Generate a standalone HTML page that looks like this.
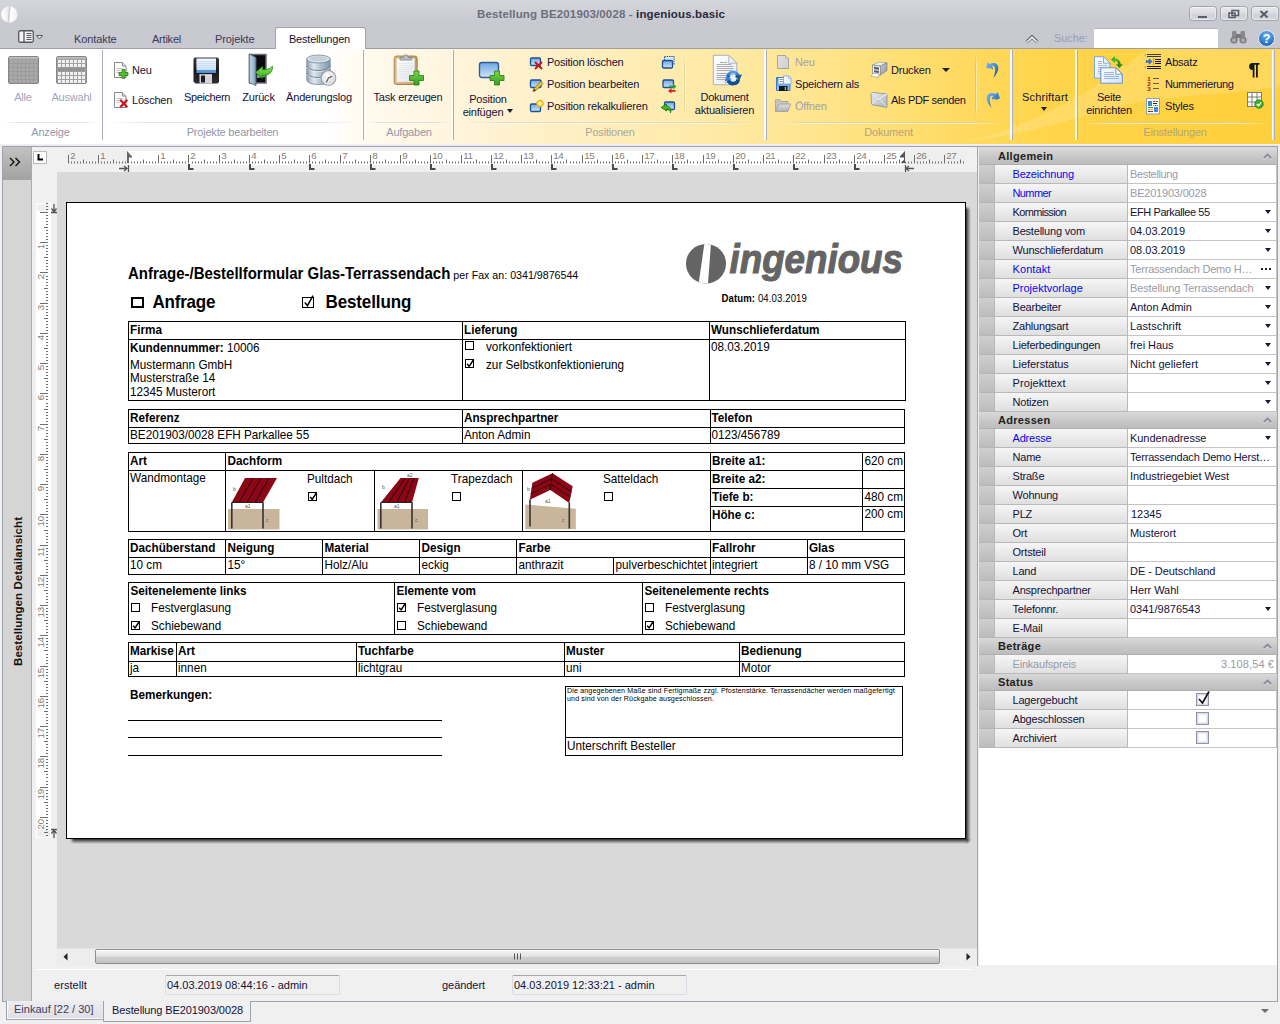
<!DOCTYPE html>
<html><head><meta charset="utf-8">
<style>
*{box-sizing:border-box;margin:0;padding:0}
html,body{width:1280px;height:1024px;overflow:hidden;background:#f0f0f0}
body{font-family:"Liberation Sans",sans-serif;font-size:11px;color:#12123a;position:relative;letter-spacing:-0.2px}
.a{position:absolute}
.t{position:absolute;white-space:nowrap;line-height:14px;height:14px}
.c{text-align:center}
svg{position:absolute;overflow:visible}
/* ---------- title + tabs ---------- */
#top{left:0;top:0;width:1280px;height:49px;background:linear-gradient(#d6d7dc 0,#d0d1d7 9px,#c8c9d1 22px,#c7c8d0 30px,#c9cad1 49px)}
#topline{left:0;top:48px;width:1280px;height:1px;background:#9c9da5}
.wb{position:absolute;top:6px;height:15px;border:1px solid #a2a3ad;border-radius:3.500px;background:linear-gradient(#e9e9ed,#dadbe0 50%,#d0d1d8 51%,#d6d7dd);box-shadow:inset 0 0 0 1px rgba(255,255,255,.45)}
.tab{color:#3a3a55}
#acttab{left:275px;top:27px;width:91px;height:23px;background:#fff;border:1px solid #a4a5ad;border-bottom:none;border-radius:3px 3px 0 0}
/* ---------- ribbon ---------- */
#ribbon{left:0;top:49px;width:1280px;height:95px;background:linear-gradient(to right,#ffffff 0,#ffffff 330px,#fffaee 366px,#fff5de 450px,#fff0c8 540px,#ffecb2 650px,#ffe89c 760px,#ffe590 810px,#ffdf74 900px,#ffd95c 980px,#ffd54c 1040px,#ffd346 1100px,#ffd03c 1280px)}
#ribbot{left:0;top:144px;width:1280px;height:2px;background:linear-gradient(#f4f4f6,#e6e6ea)}
.gs{position:absolute;top:50px;width:3px;height:90px;background:linear-gradient(to right,rgba(255,255,255,.7) 0,rgba(255,255,255,.7) 2px,#a9adbd 2px)}
.gs2{position:absolute;top:50px;width:3px;height:90px;background:linear-gradient(to right,rgba(255,255,255,.7) 0,rgba(255,255,255,.7) 1px,#a9adbd 1px,#a9adbd 2px,rgba(255,255,255,.7) 2px)}
.cap{color:#9497aa;top:125px}
.capl{position:absolute;top:122px;height:2px;background:linear-gradient(rgba(200,200,205,.5) 0,rgba(200,200,205,.5) 1px,rgba(255,255,255,.5) 1px);-webkit-mask-image:linear-gradient(to right,transparent,#000 15%,#000 85%,transparent)}
.dis{color:#a2a5b6}
/* ---------- main ---------- */
#mainborder{left:2px;top:146px;width:1276px;height:856px;border:1px solid #a0a2ae;background:#f0f0f0}
#leftpanel{left:3px;top:147px;width:29px;height:854px;background:#d5d5d5;border-right:1px solid #aaaaaa}
#dbl{left:3px;top:147px;width:28px;height:33px;background:linear-gradient(#c2c2c2,#a2a2a2);}
#docbg{left:57px;top:172px;width:920px;height:776px;background:#d9d9d9}
#page{left:66px;top:202px;width:900px;height:637px;background:#fff;border:1px solid #000}
/* doc text */
.d{position:absolute;white-space:nowrap;font-size:11.73px;line-height:14px;height:14px;color:#000;letter-spacing:0;transform:translateX(.5px) scaleY(1.07);transform-origin:0 11px}
.b{font-weight:bold}
.hl{position:absolute;height:1px;background:#000}
.vl{position:absolute;width:1px;background:#000}
.cb{position:absolute;width:9px;height:9px;border:1px solid #000;background:#fff}
/* right panel */
#rp{left:979px;top:148px;width:298px;height:817px;background:#fff}
.rh{position:absolute;left:0;width:298px;height:17px;background:linear-gradient(#d9d9d9,#c6c6c6 60%,#bdbdbd);border-bottom:1px solid #b0b0b0;font-weight:bold;letter-spacing:.3px;color:#222}
.rr{position:absolute;left:0;width:298px;height:19px}
.ri{position:absolute;left:0;top:0;width:15px;height:19px;background:linear-gradient(#cfcfcf,#bcbcbc);border-bottom:1px solid #b6b6b6}
.rl{position:absolute;left:15px;top:0;width:134px;height:19px;background:linear-gradient(#f6f6f6,#ececec 45%,#dfdfdf);border-left:1px solid #b9b9b9;border-right:1px solid #b9b9b9;border-bottom:1px solid #b9b9b9;padding-left:17.500px;line-height:18px;white-space:nowrap}
.rv{position:absolute;left:149px;top:0;width:149px;height:19px;border-bottom:1px solid #c4c4c4;border-right:1px solid #c4c4c4;padding-left:2px;line-height:18px;white-space:nowrap;overflow:hidden;letter-spacing:-.05px}
.blue{color:#0808f2}
.gray{color:#9a9aa8}
.dd{position:absolute;right:5px;top:7px;width:0;height:0;border-left:3.500px solid transparent;border-right:3.500px solid transparent;border-top:4px solid #1a1a30}
</style></head>
<body>
<div class="a" id="top"></div>
<div class="a" id="topline"></div>
<!-- app logo -->
<svg style="left:1px;top:5.500px" width="17" height="17" viewBox="0 0 17 17"><defs><linearGradient id="lg0" x1="0" y1="0" x2="1" y2="0"><stop offset="0" stop-color="#ffffff"/><stop offset=".45" stop-color="#ececee"/><stop offset=".55" stop-color="#ffffff"/><stop offset="1" stop-color="#f2f2f4"/></linearGradient></defs><circle cx="8.300" cy="8.500" r="8.200" fill="url(#lg0)"/><path d="M8.900 0 L7.300 17" stroke="#cccdd4" stroke-width="1.500"/></svg>
<div class="t b" style="left:477px;top:7px;font-size:11.500px;letter-spacing:.14px;font-weight:bold;color:#6d6e7c">Bestellung BE201903/0028 - <span style="color:#2a2a3a">ingenious.basic</span></div>
<!-- window buttons -->
<div class="wb" style="left:1188.500px;width:28px"></div>
<div class="wb" style="left:1219.500px;width:28px"></div>
<div class="wb" style="left:1250.500px;width:28px"></div>
<svg style="left:1189px;top:7px" width="90" height="14" viewBox="0 0 90 14">
<rect x="9" y="9" width="9" height="2" fill="#5c5d6b"/>
<path d="M43 3.5h6.5v5h-6.5z M40 6h6v4.5h-6z" fill="#e6e6ea" stroke="#5c5d6b" stroke-width="1.6"/>
<path d="M71.5 4 L78.5 10.5 M78.5 4 L71.5 10.5" stroke="#5c5d6b" stroke-width="2.2"/>
</svg>
<!-- quick menu icon -->
<svg style="left:18px;top:30px" width="26" height="14" viewBox="0 0 26 14">
<rect x=".75" y=".75" width="14.5" height="11.5" rx="1.5" fill="#f4f4f6" stroke="#55565f" stroke-width="1.3"/>
<path d="M6 1v11" stroke="#55565f" stroke-width="1.3"/>
<path d="M8.5 3.5h5M8.5 5.5h5M8.5 7.5h5M8.5 9.5h5" stroke="#55565f" stroke-width="1"/>
<path d="M18.5 5.5h6l-3 3.5z" fill="#f4f4f6" stroke="#55565f" stroke-width="1"/>
</svg>
<div class="t tab" style="left:74px;top:32px;letter-spacing:-.1px">Kontakte</div>
<div class="t tab" style="left:152px;top:32px;letter-spacing:-.22px">Artikel</div>
<div class="t tab" style="left:215px;top:32px;letter-spacing:-.1px">Projekte</div>
<div class="a" id="acttab"></div>
<div class="t" style="left:289px;top:32px;letter-spacing:-.22px">Bestellungen</div>
<!-- right side of tab row -->
<svg style="left:1025px;top:34px" width="14" height="10" viewBox="0 0 14 10"><path d="M1.800 7.800 L7 2.800 L12.200 7.800" fill="none" stroke="#6b6c78" stroke-width="3.400"/><path d="M2.200 7.800 L7 3.200 L11.800 7.800" fill="none" stroke="#f6f6f8" stroke-width="1.500"/></svg>
<div class="t" style="left:1054px;top:31px;color:#9c9dac;letter-spacing:-.1px">Suche:</div>
<div class="a" style="left:1094px;top:28px;width:124px;height:20px;background:#fff;border-top:1px solid #b4b5be"></div>
<!-- binoculars -->
<svg style="left:1230px;top:30px" width="17" height="15" viewBox="0 0 17 15">
<rect x="2" y="1" width="4.5" height="6" rx="1" fill="#8a8a8a"/><rect x="10.5" y="1" width="4.5" height="6" rx="1" fill="#8a8a8a"/>
<rect x="6" y="4" width="5" height="4" fill="#777"/>
<circle cx="4" cy="10" r="3.6" fill="#7d7d7d"/><circle cx="13" cy="10" r="3.6" fill="#7d7d7d"/>
<circle cx="4" cy="10.3" r="2" fill="#a9a9a9"/><circle cx="13" cy="10.3" r="2" fill="#a9a9a9"/>
</svg>
<!-- help -->
<svg style="left:1258px;top:30px" width="17" height="17" viewBox="0 0 17 17">
<defs><radialGradient id="hg" cx=".5" cy=".3" r=".7"><stop offset="0" stop-color="#6db4f0"/><stop offset="1" stop-color="#1a62b8"/></radialGradient></defs>
<circle cx="8.5" cy="8.5" r="8" fill="url(#hg)" stroke="#e8eef8" stroke-width="1"/>
<text x="8.5" y="13" font-family="Liberation Sans" font-weight="bold" font-size="12.5" fill="#fff" text-anchor="middle" letter-spacing="0">?</text>
</svg>

<div class="a" id="ribbon"></div>
<!-- wave decoration -->
<svg style="left:0;top:49px" width="1280" height="94" viewBox="0 0 1280 94">
<defs><pattern id="stp" width="3" height="3" patternUnits="userSpaceOnUse" patternTransform="rotate(-35)"><rect width="3" height="1" fill="#fff" opacity=".5"/></pattern></defs>
<path d="M960 94 C1000 86,1040 68,1070 52 C1100 36,1125 16,1148 0 L1280 0 L1280 38 C1230 44,1180 47,1145 52 C1100 60,1040 84,960 94 Z" fill="#fff" opacity=".11"/>
<path d="M960 94 C1000 86,1040 68,1070 52 C1100 36,1125 16,1148 0 L1280 0 L1280 38 C1230 44,1180 47,1145 52 C1100 60,1040 84,960 94 Z" fill="url(#stp)" opacity=".3"/>
</svg>
<div class="a" id="ribbot"></div>
<div class="gs" style="left:100px"></div><div class="gs" style="left:361px"></div><div class="gs" style="left:451px"></div><div class="gs" style="left:764px"></div><div class="gs" style="left:1010px"></div><div class="gs" style="left:1075px"></div><div class="gs2" style="left:1272px"></div>
<div class="gs" style="left:764px"></div><div class="gs" style="left:1010px"></div><div class="gs" style="left:1075px"></div><div class="gs" style="left:1272px"></div>
<div class="a" style="left:684px;top:54px;width:2px;height:64px;background:linear-gradient(to right,rgba(205,185,120,.35) 0,rgba(205,185,120,.35) 1px,rgba(255,255,255,.6) 1px);-webkit-mask-image:linear-gradient(transparent,#000 20%,#000 80%,transparent)"></div>
<div class="a" style="left:975px;top:54px;width:2px;height:64px;background:linear-gradient(to right,rgba(205,165,60,.4) 0,rgba(205,165,60,.4) 1px,rgba(255,255,255,.5) 1px);-webkit-mask-image:linear-gradient(transparent,#000 20%,#000 80%,transparent)"></div>
<div class="capl" style="left:4px;width:94px"></div><div class="capl" style="left:108px;width:251px"></div><div class="capl" style="left:369px;width:80px"></div>
<div class="capl" style="left:459px;width:302px"></div><div class="capl" style="left:771px;width:236px"></div><div class="capl" style="left:1082px;width:187px"></div>
<div class="t cap c" style="left:10px;width:81px">Anzeige</div>
<div class="t cap c" style="left:172px;width:121px">Projekte bearbeiten</div>
<div class="t cap c" style="left:369px;width:80px">Aufgaben</div>
<div class="t cap c" style="left:560px;width:100px;color:#a9a69e">Positionen</div>
<div class="t cap c" style="left:838px;width:101px;color:#b3a47d">Dokument</div>
<div class="t cap c" style="left:1125px;width:100px;color:#b3a47d">Einstellungen</div>

<!-- ===== Anzeige ===== -->
<svg style="left:8px;top:56px" width="31" height="28" viewBox="0 0 31 28"><defs><linearGradient id="tba" x1="0" y1="0" x2="0" y2="1"><stop offset="0" stop-color="#c6c6c6"/><stop offset="1" stop-color="#a6a6a6"/></linearGradient></defs><rect x=".5" y=".5" width="30" height="27" rx="1.500" fill="#9b9b9b" stroke="#858585"/><rect x="1" y="1" width="29" height="2.500" fill="url(#tba)"/><rect x="2" y="4" width="3" height="3" fill="#a9a9a9"/><rect x="6" y="4" width="3" height="3" fill="#a9a9a9"/><rect x="10" y="4" width="3" height="3" fill="#a9a9a9"/><rect x="14" y="4" width="3" height="3" fill="#a9a9a9"/><rect x="18" y="4" width="3" height="3" fill="#a9a9a9"/><rect x="22" y="4" width="3" height="3" fill="#a9a9a9"/><rect x="26" y="4" width="3" height="3" fill="#a9a9a9"/><rect x="2" y="8" width="3" height="3" fill="#a9a9a9"/><rect x="6" y="8" width="3" height="3" fill="#a9a9a9"/><rect x="10" y="8" width="3" height="3" fill="#a9a9a9"/><rect x="14" y="8" width="3" height="3" fill="#a9a9a9"/><rect x="18" y="8" width="3" height="3" fill="#a9a9a9"/><rect x="22" y="8" width="3" height="3" fill="#a9a9a9"/><rect x="26" y="8" width="3" height="3" fill="#a9a9a9"/><rect x="2" y="12" width="3" height="3" fill="#a9a9a9"/><rect x="6" y="12" width="3" height="3" fill="#a9a9a9"/><rect x="10" y="12" width="3" height="3" fill="#a9a9a9"/><rect x="14" y="12" width="3" height="3" fill="#a9a9a9"/><rect x="18" y="12" width="3" height="3" fill="#a9a9a9"/><rect x="22" y="12" width="3" height="3" fill="#a9a9a9"/><rect x="26" y="12" width="3" height="3" fill="#a9a9a9"/><rect x="2" y="16" width="3" height="3" fill="#a9a9a9"/><rect x="6" y="16" width="3" height="3" fill="#a9a9a9"/><rect x="10" y="16" width="3" height="3" fill="#a9a9a9"/><rect x="14" y="16" width="3" height="3" fill="#a9a9a9"/><rect x="18" y="16" width="3" height="3" fill="#a9a9a9"/><rect x="22" y="16" width="3" height="3" fill="#a9a9a9"/><rect x="26" y="16" width="3" height="3" fill="#a9a9a9"/><rect x="2" y="20" width="3" height="3" fill="#a9a9a9"/><rect x="6" y="20" width="3" height="3" fill="#a9a9a9"/><rect x="10" y="20" width="3" height="3" fill="#a9a9a9"/><rect x="14" y="20" width="3" height="3" fill="#a9a9a9"/><rect x="18" y="20" width="3" height="3" fill="#a9a9a9"/><rect x="22" y="20" width="3" height="3" fill="#a9a9a9"/><rect x="26" y="20" width="3" height="3" fill="#a9a9a9"/><rect x="2" y="24" width="3" height="3" fill="#a9a9a9"/><rect x="6" y="24" width="3" height="3" fill="#a9a9a9"/><rect x="10" y="24" width="3" height="3" fill="#a9a9a9"/><rect x="14" y="24" width="3" height="3" fill="#a9a9a9"/><rect x="18" y="24" width="3" height="3" fill="#a9a9a9"/><rect x="22" y="24" width="3" height="3" fill="#a9a9a9"/><rect x="26" y="24" width="3" height="3" fill="#a9a9a9"/></svg>
<svg style="left:56px;top:56px" width="31" height="28" viewBox="0 0 31 28"><defs><linearGradient id="tbb" x1="0" y1="0" x2="0" y2="1"><stop offset="0" stop-color="#c6c6c6"/><stop offset="1" stop-color="#a6a6a6"/></linearGradient></defs><rect x=".5" y=".5" width="30" height="27" rx="1.500" fill="#a2a2a2" stroke="#868686"/><rect x="1" y="1" width="29" height="2.500" fill="url(#tbb)"/><rect x="2" y="4" width="3" height="3" fill="#f1f1f1"/><rect x="6" y="4" width="3" height="3" fill="#f1f1f1"/><rect x="10" y="4" width="3" height="3" fill="#f1f1f1"/><rect x="14" y="4" width="3" height="3" fill="#f1f1f1"/><rect x="18" y="4" width="3" height="3" fill="#f1f1f1"/><rect x="22" y="4" width="3" height="3" fill="#f1f1f1"/><rect x="26" y="4" width="3" height="3" fill="#f1f1f1"/><rect x="2" y="8" width="3" height="3" fill="#f1f1f1"/><rect x="6" y="8" width="3" height="3" fill="#f1f1f1"/><rect x="10" y="8" width="3" height="3" fill="#f1f1f1"/><rect x="14" y="8" width="3" height="3" fill="#f1f1f1"/><rect x="18" y="8" width="3" height="3" fill="#f1f1f1"/><rect x="22" y="8" width="3" height="3" fill="#f1f1f1"/><rect x="26" y="8" width="3" height="3" fill="#f1f1f1"/><rect x="2" y="12" width="3" height="3" fill="#949494"/><rect x="6" y="12" width="3" height="3" fill="#949494"/><rect x="10" y="12" width="3" height="3" fill="#949494"/><rect x="14" y="12" width="3" height="3" fill="#949494"/><rect x="18" y="12" width="3" height="3" fill="#949494"/><rect x="22" y="12" width="3" height="3" fill="#949494"/><rect x="26" y="12" width="3" height="3" fill="#949494"/><rect x="2" y="16" width="3" height="3" fill="#f1f1f1"/><rect x="6" y="16" width="3" height="3" fill="#f1f1f1"/><rect x="10" y="16" width="3" height="3" fill="#f1f1f1"/><rect x="14" y="16" width="3" height="3" fill="#f1f1f1"/><rect x="18" y="16" width="3" height="3" fill="#f1f1f1"/><rect x="22" y="16" width="3" height="3" fill="#f1f1f1"/><rect x="26" y="16" width="3" height="3" fill="#f1f1f1"/><rect x="2" y="20" width="3" height="3" fill="#f1f1f1"/><rect x="6" y="20" width="3" height="3" fill="#f1f1f1"/><rect x="10" y="20" width="3" height="3" fill="#f1f1f1"/><rect x="14" y="20" width="3" height="3" fill="#f1f1f1"/><rect x="18" y="20" width="3" height="3" fill="#f1f1f1"/><rect x="22" y="20" width="3" height="3" fill="#f1f1f1"/><rect x="26" y="20" width="3" height="3" fill="#f1f1f1"/><rect x="2" y="24" width="3" height="3" fill="#f1f1f1"/><rect x="6" y="24" width="3" height="3" fill="#f1f1f1"/><rect x="10" y="24" width="3" height="3" fill="#f1f1f1"/><rect x="14" y="24" width="3" height="3" fill="#f1f1f1"/><rect x="18" y="24" width="3" height="3" fill="#f1f1f1"/><rect x="22" y="24" width="3" height="3" fill="#f1f1f1"/><rect x="26" y="24" width="3" height="3" fill="#f1f1f1"/><rect x="2" y="11.500" width="27" height="4" fill="#8f8f8f" opacity=".55"/></svg>
<div class="t c dis" style="left:3px;width:40px;top:90px">Alle</div>
<div class="t c dis" style="left:46px;width:51px;top:90px">Auswahl</div>

<!-- ===== Projekte bearbeiten ===== -->
<svg style="left:114px;top:62px" width="16" height="17" viewBox="0 0 16 17">
<path d="M.5 .5h8l3.500 3.500v11.500h-11.500z" fill="#fbfbfb" stroke="#8b8b8b"/><path d="M8.500 .5v3.500h3.500" fill="#e8e8e8" stroke="#8b8b8b"/>
<path d="M2.500 6.500h6M2.500 8.500h4M2.500 10.500h3" stroke="#c4c4c4"/>
<path d="M8 7.500h3v3h3v3h-3v2.800h-3v-2.800h-3v-3h3z" fill="#56c030" stroke="#2a7a12" stroke-width=".8"/>
</svg>
<div class="t" style="left:132px;top:63px">Neu</div>
<svg style="left:114px;top:92px" width="16" height="17" viewBox="0 0 16 17">
<path d="M.5 .5h8l3.500 3.500v11.500h-11.500z" fill="#fbfbfb" stroke="#8b8b8b"/><path d="M8.500 .5v3.500h3.500" fill="#e8e8e8" stroke="#8b8b8b"/>
<path d="M2.500 6.500h6M2.500 8.500h4M2.500 10.500h3" stroke="#c4c4c4"/>
<path d="M6.200 7.800 L13.300 15.200 M13.300 7.800 L6.200 15.200" stroke="#c8141e" stroke-width="2.200"/>
</svg>
<div class="t" style="left:132px;top:93px">Löschen</div>
<!-- Speichern floppy -->
<svg style="left:193px;top:57px" width="27" height="27" viewBox="0 0 27 27">
<defs><linearGradient id="fl" x1="0" y1="0" x2="0" y2="1"><stop offset="0" stop-color="#f4f9ff"/><stop offset=".75" stop-color="#d4e6fa"/><stop offset=".8" stop-color="#5f9fdc"/><stop offset="1" stop-color="#4a8bd0"/></linearGradient>
<linearGradient id="fb" x1="0" y1="0" x2="0" y2="1"><stop offset="0" stop-color="#3a3a40"/><stop offset=".5" stop-color="#17171b"/><stop offset="1" stop-color="#2c2c32"/></linearGradient></defs>
<path d="M1.500 .5h23l1.500 1.500v23l-1.500 1.500h-22l-2-2v-22.500z" fill="url(#fb)"/>
<rect x="3.500" y="1.500" width="19.500" height="14.500" fill="url(#fl)"/>
<path d="M3.500 4.500h19.500M3.500 6.500h19.500M3.500 8.500h19.500M3.500 10.500h19.500" stroke="#c3d9f2" stroke-width=".8"/>
<rect x="6.500" y="17.500" width="12.500" height="9" fill="#d4d4d8"/><rect x="6.500" y="17.500" width="12.500" height="1" fill="#f4f4f4"/>
<rect x="8" y="18.500" width="4" height="7" fill="#1c1c22"/>
</svg>
<div class="t c" style="left:177px;width:60px;top:90px;letter-spacing:-.39px">Speichern</div>
<!-- Zurück door -->
<svg style="left:248px;top:53px" width="26" height="33" viewBox="0 0 26 33">
<defs><linearGradient id="dr" x1="0" y1="0" x2="1" y2="0"><stop offset="0" stop-color="#c3d7e8"/><stop offset=".6" stop-color="#9fbbd2"/><stop offset="1" stop-color="#6f8ca5"/></linearGradient>
<linearGradient id="ar" x1="0" y1="0" x2="0" y2="1"><stop offset="0" stop-color="#8fe65a"/><stop offset="1" stop-color="#2faa16"/></linearGradient></defs>
<path d="M1.500 1.500h16.500v28.500h-16.500z" fill="#0c0c10" stroke="#6d6f75" stroke-width="1.500"/>
<path d="M1.300 1 L8 4.500 V32.500 L1.300 29.500 Z" fill="url(#dr)" stroke="#566b80" stroke-width=".9"/>
<path d="M9 22l8-1.500v3.500l-8 1z" fill="#b5b5b5" opacity=".8"/>
<path d="M7.500 19.500 L14.500 13.500 V16.800 C18.500 16.800 21.500 16.300 24.500 13.200 C24.800 19.500 20.500 22.800 14.500 22.500 V25.500 Z" fill="url(#ar)" stroke="#218a10" stroke-width=".8"/>
</svg>
<div class="t c" style="left:238px;width:41px;top:90px">Zurück</div>
<!-- Änderungslog -->
<svg style="left:306px;top:54px" width="32" height="33" viewBox="0 0 32 33">
<defs><linearGradient id="db" x1="0" y1="0" x2="1" y2="0"><stop offset="0" stop-color="#8da1b0"/><stop offset=".3" stop-color="#dfe8ee"/><stop offset=".55" stop-color="#b5c6d2"/><stop offset="1" stop-color="#7d93a4"/></linearGradient>
<radialGradient id="ck" cx=".4" cy=".35" r=".7"><stop offset="0" stop-color="#ffffff"/><stop offset="1" stop-color="#d4d4d4"/></radialGradient></defs>
<path d="M.8 5v21c0 2.700 5.200 4.500 11.700 4.500s11.700-1.800 11.700-4.500v-21z" fill="url(#db)" stroke="#74889a" stroke-width=".8"/>
<ellipse cx="12.500" cy="5" rx="11.700" ry="4" fill="#d9e3ea" stroke="#74889a" stroke-width=".8"/>
<ellipse cx="12.500" cy="4.700" rx="9" ry="2.600" fill="#c2d0da"/>
<path d="M.8 12c0 2.700 5.200 4.500 11.700 4.500s11.700-1.800 11.700-4.500M.8 19c0 2.700 5.200 4.500 11.700 4.500s11.700-1.800 11.700-4.500" fill="none" stroke="#6b8092" stroke-width="1"/>
<path d="M.8 13c0 2.700 5.200 4.500 11.700 4.500s11.700-1.800 11.700-4.500M.8 20c0 2.700 5.200 4.500 11.700 4.500s11.700-1.800 11.700-4.500" fill="none" stroke="#f0f4f7" stroke-width=".8" opacity=".8"/>
<circle cx="22.500" cy="24" r="7.800" fill="#8d8d8d"/>
<circle cx="22.500" cy="24" r="6.500" fill="url(#ck)" stroke="#f8f8f8" stroke-width=".8"/>
<path d="M26.300 22.300l-3.800 1.700-2.200 4.300" fill="none" stroke="#555" stroke-width="1.100" stroke-linejoin="miter"/>
</svg>
<div class="t c" style="left:282px;width:74px;top:90px;letter-spacing:-.16px">Änderungslog</div>

<!-- ===== Aufgaben ===== -->
<svg style="left:393px;top:53px" width="32" height="34" viewBox="0 0 32 34">
<defs><linearGradient id="cl" x1="0" y1="0" x2="1" y2="0"><stop offset="0" stop-color="#e0bb84"/><stop offset="1" stop-color="#c99a58"/></linearGradient>
<linearGradient id="pp" x1="0" y1="0" x2="1" y2="1"><stop offset="0" stop-color="#ffffff"/><stop offset="1" stop-color="#dfe3e8"/></linearGradient>
<linearGradient id="pl" x1="0" y1="0" x2="0" y2="1"><stop offset="0" stop-color="#7cd651"/><stop offset="1" stop-color="#3a9c1e"/></linearGradient></defs>
<rect x="1.200" y="3" width="23" height="28.500" rx="2.500" fill="url(#cl)" stroke="#a87a3a" stroke-width=".9"/>
<rect x="3.800" y="5.500" width="18" height="23.500" fill="url(#pp)" stroke="#d6d6d6" stroke-width=".5"/>
<path d="M5.500 10.500h14.500M5.500 12.500h14.500M5.500 14.500h14.500M5.500 16.500h14.500M5.500 18.500h14.500M5.500 20.500h14.500M5.500 22.500h14.500M5.500 24.500h14.500" stroke="#e3e6ea" stroke-width=".8"/>
<path d="M7 7v-2.500h3.500c0-1.800 .9-2.800 2.300-2.800s2.300 1 2.300 2.800h3.500v2.500z" fill="#b9bdc4" stroke="#7e838b" stroke-width=".8"/>
<path d="M21 18h5v4.500h4.500v5h-4.500v4.500h-5v-4.500h-4.500v-5h4.500z" fill="url(#pl)" stroke="#2e8416" stroke-width=".9"/>
</svg>
<div class="t c" style="left:368px;width:80px;top:90px">Task erzeugen</div>

<!-- ===== Positionen ===== -->
<svg style="left:478px;top:60px" width="29" height="27" viewBox="0 0 29 27">
<defs><linearGradient id="pb" x1="0" y1="0" x2="0" y2="1"><stop offset="0" stop-color="#6ea6e2"/><stop offset="1" stop-color="#cfe4fa"/></linearGradient></defs>
<rect x="1.500" y="2.500" width="19" height="15" rx="2.500" fill="url(#pb)" stroke="#2d5e9c" stroke-width="1.400"/>
<path d="M16.500 11h5v4.500h4.500v5h-4.500v4.500h-5v-4.500h-4.500v-5h4.500z" fill="url(#pl)" stroke="#2e8416" stroke-width=".9"/>
</svg>
<div class="t c" style="left:457px;width:62px;top:92px">Position</div>
<div class="t c" style="left:452px;width:62px;top:105px">einfügen</div>
<div class="a" style="left:506.500px;top:109px;border-left:3.500px solid transparent;border-right:3.500px solid transparent;border-top:4px solid #1a1a30"></div>
<!-- small: Position löschen -->
<svg style="left:529px;top:55px" width="16" height="16" viewBox="0 0 16 16">
<rect x="1.500" y="3" width="10" height="7.500" rx="1.200" fill="url(#pb)" stroke="#1c4f8f" stroke-width="1.300"/>
<path d="M6 7 L13 14 M13 7 L6 14" stroke="#c8141e" stroke-width="2"/>
</svg>
<div class="t" style="left:547px;top:55px;letter-spacing:-.23px">Position löschen</div>
<svg style="left:529px;top:77px" width="16" height="16" viewBox="0 0 16 16">
<rect x="1.500" y="3" width="10.500" height="7.500" rx="1.200" fill="url(#pb)" stroke="#1c4f8f" stroke-width="1.300"/>
<path d="M4 14.500 l1-3 7-7 2 2 -7 7z" fill="#f1c232" stroke="#8a6a10" stroke-width=".8"/><path d="M4 14.500l1-3 2 2z" fill="#444"/>
</svg>
<div class="t" style="left:547px;top:77px;letter-spacing:-.1px">Position bearbeiten</div>
<svg style="left:529px;top:99px" width="16" height="16" viewBox="0 0 16 16">
<rect x="1.500" y="5" width="10" height="7.500" rx="1.200" fill="url(#pb)" stroke="#1c4f8f" stroke-width="1.300"/>
<circle cx="11" cy="4.500" r="3.300" fill="#ffd83a" stroke="#e8a600" stroke-width=".9"/><circle cx="11" cy="4.500" r="1.400" fill="#fff6c0"/>
</svg>
<div class="t" style="left:547px;top:99px;letter-spacing:-.18px">Position rekalkulieren</div>
<!-- tiny icons column -->
<svg style="left:660px;top:55px" width="16" height="16" viewBox="0 0 16 16">
<rect x="4.500" y="1.500" width="9.500" height="7.500" fill="#d6e8fb" stroke="#1c4f8f" stroke-width="1.100" stroke-dasharray="1.300 1"/>
<rect x="2.500" y="5.500" width="10" height="7.500" rx="1.200" fill="url(#pb)" stroke="#1c4f8f" stroke-width="1.300"/>
</svg>
<svg style="left:660px;top:77px" width="16" height="16" viewBox="0 0 16 16">
<rect x="3" y="3" width="10.500" height="7.500" rx="1.200" fill="url(#pb)" stroke="#1c4f8f" stroke-width="1.300"/>
<path d="M9 8.500h4v-2l3.500 3-3.500 3v-2h-4z" fill="#2fa32a"/>
<path d="M15.500 13h-4v-2l-3.500 3 3.500 2.500v-1.800h4z" fill="#d0202a"/>
</svg>
<svg style="left:659px;top:99px" width="17" height="16" viewBox="0 0 17 16">
<rect x="5.500" y="3" width="10" height="7.500" rx="1.200" fill="url(#pb)" stroke="#1c4f8f" stroke-width="1.300"/>
<path d="M7.500 5 L2 8.500 L7.500 12 V10 C10 10 11 11 11.500 14 C13 10 11 7 7.500 7 Z" fill="#46b52c" stroke="#1f7a10" stroke-width=".8"/>
</svg>
<!-- Dokument aktualisieren -->
<svg style="left:712px;top:54px" width="31" height="33" viewBox="0 0 31 33">
<defs><linearGradient id="dp" x1="0" y1="0" x2="1" y2="1"><stop offset="0" stop-color="#ffffff"/><stop offset="1" stop-color="#e3e9f1"/></linearGradient>
<linearGradient id="ra" x1="0" y1="0" x2="0" y2="1"><stop offset="0" stop-color="#4a9be6"/><stop offset="1" stop-color="#0f518f"/></linearGradient></defs>
<path d="M1.300 1.300h15.500l8 8v21.500h-23.500z" fill="url(#dp)" stroke="#a4a9b0" stroke-width=".9"/><path d="M16.800 1.300v8h8z" fill="#eef1f5" stroke="#a4a9b0" stroke-width=".8"/>
<path d="M8 8.500h7M4.500 10.500h15M4.500 12.500h17M4.500 14.500h17M4.500 16.500h16M4.500 19.500h12M4.500 21.500h11M4.500 23.500h11M4.500 25.500h10M13 28.500h3" stroke="#9a9a9a" stroke-width=".8"/>
<path d="M15.980 22.880 A5.300 5.300 0 0 1 26.180 21.990" fill="none" stroke="url(#ra)" stroke-width="3.600"/>
<path d="M27.600 26 L30 20.300 L22.700 22.600 Z" fill="#16589a"/>
<path d="M26.420 25.200 A5.300 5.300 0 0 1 16.220 26.100" fill="none" stroke="#0f518f" stroke-width="3.600"/>
<path d="M14.800 21.500 L12.600 27.400 L19.600 25.200 Z" fill="#2f7fce"/>
<path d="M17.500 21.500 a4.500 4.500 0 0 1 6 -1.500" fill="none" stroke="#cfe6ff" stroke-width="1" opacity=".8"/>
</svg>
<div class="t c" style="left:690px;width:69px;top:90px;letter-spacing:-.27px">Dokument</div>
<div class="t c" style="left:690px;width:69px;top:103px;letter-spacing:-.17px">aktualisieren</div>

<!-- ===== Dokument ===== -->
<svg style="left:776px;top:54px" width="15" height="17" viewBox="0 0 15 17">
<defs><linearGradient id="dn" x1="0" y1="0" x2="1" y2="1"><stop offset="0" stop-color="#e2e2e2"/><stop offset="1" stop-color="#cfcfcf"/></linearGradient></defs>
<path d="M1.500 1.500h8l3 3v10h-11z" fill="url(#dn)" stroke="#a6a6a6" stroke-width="1"/><path d="M9.500 1.500v3h3z" fill="#f0f0f0" stroke="#a6a6a6" stroke-width=".7"/>
</svg>
<div class="t dis" style="left:795px;top:55px;color:#9fa1b0">Neu</div>
<svg style="left:775px;top:75px" width="17" height="17" viewBox="0 0 17 17">
<defs><linearGradient id="sa" x1="0" y1="0" x2="0" y2="1"><stop offset="0" stop-color="#3f86dc"/><stop offset="1" stop-color="#9cc6f3"/></linearGradient></defs>
<path d="M1.500 2.500h12.500l1 1v12h-13.500z" fill="url(#sa)" stroke="#2f73c8" stroke-width=".9"/>
<rect x="3.500" y="3" width="5.500" height="5.500" fill="#fdfdfd"/><path d="M4.500 4.500h3.500M4.500 6.500h3.500" stroke="#7a8fa8" stroke-width=".9"/>
<rect x="4" y="11" width="8.500" height="5" fill="#15151a"/><rect x="9.800" y="12" width="1.300" height="3.200" fill="#8fc0f2"/>
<path d="M8.500 .8h5l2.500 2.500v5.700h-7.500z" fill="#f1f7fe" stroke="#6fa0dc" stroke-width=".8"/><path d="M13.500 .8v2.500h2.500z" fill="#fff" stroke="#6fa0dc" stroke-width=".6"/>
</svg>
<div class="t" style="left:795px;top:77px">Speichern als</div>
<svg style="left:774px;top:98px" width="18" height="15" viewBox="0 0 18 15">
<defs><linearGradient id="fo" x1="0" y1="0" x2="0" y2="1"><stop offset="0" stop-color="#dedede"/><stop offset="1" stop-color="#b4b4b4"/></linearGradient></defs>
<path d="M1.500 1.800h4.500l1.200 1.700h6.800v9.800h-12.500z" fill="#c6c6c6" stroke="#a3a3a3" stroke-width=".9"/>
<path d="M1.500 13.300l3.500-7.300h11.800l-3.300 7.300z" fill="url(#fo)" stroke="#a0a0a0" stroke-width=".9"/>
</svg>
<div class="t dis" style="left:795px;top:99px;color:#9fa1b0">Öffnen</div>
<!-- Drucken -->
<svg style="left:870px;top:61px" width="18" height="18" viewBox="0 0 18 18">
<defs><linearGradient id="prs" x1="0" y1="0" x2="1" y2="1"><stop offset="0" stop-color="#c9ced3"/><stop offset="1" stop-color="#8c949c"/></linearGradient></defs>
<path d="M2.500 4 L9 1 L17 1.700 L10.500 5 Z" fill="#e9ecef" stroke="#8a9199" stroke-width=".6"/>
<path d="M10.500 5 L17 1.700 L17 9.500 L10.500 14 Z" fill="url(#prs)" stroke="#6f7780" stroke-width=".6"/>
<path d="M2.500 4 L10.500 5 L10.500 14 L2.500 12.500 Z" fill="#eef0f2" stroke="#7a828a" stroke-width=".7"/>
<path d="M4 5.800 L9 6.500 L9 12 L4 11.200 Z" fill="#59626b"/>
<path d="M4 8 L9 8.700 L9 10 L4 9.300 Z" fill="#d5d9dd"/>
<path d="M4.200 6 l1.500 .2" stroke="#3fb52a" stroke-width="1"/>
<path d="M3.500 12 L9.500 13 L8 16.500 L1 15 Z" fill="#fbfbfb" stroke="#8a9199" stroke-width=".6"/>
</svg>
<div class="t" style="left:891px;top:63px">Drucken</div>
<div class="a" style="left:942px;top:68px;border-left:4px solid transparent;border-right:4px solid transparent;border-top:4px solid #1e1e2d"></div>
<svg style="left:870px;top:91px" width="18" height="18" viewBox="0 0 18 18">
<defs><linearGradient id="env" x1="0" y1="0" x2="1" y2="1"><stop offset="0" stop-color="#eceef0"/><stop offset="1" stop-color="#a9b1b9"/></linearGradient></defs>
<path d="M1 1.300 L17 3 L17 16.500 L1.500 13.500 Z" fill="url(#env)" stroke="#858d96" stroke-width=".8"/>
<path d="M1 1.300 L8 9.300 L17 3" fill="none" stroke="#f8f9fa" stroke-width="1.100"/>
<path d="M1.500 13.500 L6.500 7.800 M17 16.500 L10 8" fill="none" stroke="#f2f3f5" stroke-width=".8"/>
<path d="M1 1.300 L8 9.300 L17 3" fill="none" stroke="#8f979f" stroke-width=".4" transform="translate(0 .8)"/>
</svg>
<div class="t" style="left:891px;top:93px;letter-spacing:-.35px">Als PDF senden</div>
<!-- undo / redo -->
<svg style="left:985px;top:61px" width="16" height="18" viewBox="0 0 16 18">
<defs><linearGradient id="ud" x1="0" y1="0" x2="1" y2="1"><stop offset="0" stop-color="#7cc0ff"/><stop offset="1" stop-color="#0e4aa8"/></linearGradient></defs>
<path d="M2.200 1.300 L1.200 7 L3.800 7.200 C6 7 7.500 7.600 7.900 8.700 L8.100 8.700 C8.300 5.500 6.500 5 6 5 C9 4 10.500 6 10.200 9.500 C10 12.500 9 14.500 8.600 16.800 C11.500 13.500 13.300 10 13.300 7 C13.300 3.500 10.500 1.200 6.500 2.300 L5 3 Z" fill="url(#ud)"/>
</svg>
<svg style="left:985px;top:91px" width="16" height="18" viewBox="0 0 16 18">
<path d="M12.800 1.300 L15 7.200 L11.500 8.700 C9 7.500 7.500 8 7.200 8.700 L6.900 8.700 C6.700 5.500 8.500 5 9 5 C6 4 4.500 6 4.800 9.500 C5 12.500 6 14.500 6.400 16.800 C3.500 13.500 1.700 10 1.700 7 C1.700 3.500 4.500 1.200 8.500 2.300 L10.500 3 Z" fill="url(#ud)"/>
</svg>
<!-- Schriftart -->
<div class="t c" style="left:1015px;width:60px;top:90px;letter-spacing:.2px">Schriftart</div>
<div class="a" style="left:1041px;top:107px;border-left:3.500px solid transparent;border-right:3.500px solid transparent;border-top:4px solid #1e1e2d"></div>

<!-- ===== Einstellungen ===== -->
<svg style="left:1093px;top:55px" width="33" height="31" viewBox="0 0 33 31">
<defs><linearGradient id="pg" x1="0" y1="0" x2="1" y2="1"><stop offset="0" stop-color="#ffffff"/><stop offset="1" stop-color="#d3e2f4"/></linearGradient>
<linearGradient id="ga" x1="0" y1="0" x2="1" y2="1"><stop offset="0" stop-color="#5fce3e"/><stop offset="1" stop-color="#1f8a10"/></linearGradient></defs>
<path d="M1.500 1.700h9l6.500 6.500v15h-15.500z" fill="url(#pg)" stroke="#7fa3d8" stroke-width="1"/><path d="M10.500 1.700v6.500h6.500z" fill="#f4f8fd" stroke="#7fa3d8" stroke-width=".9"/>
<path d="M5 6.500h4M5 8.500h4M5 10.500h9M5 12.500h9M5 14.500h4M5 16.500h3M5 18.500h3" stroke="#9dbbe0" stroke-width=".9"/>
<path d="M7.800 12.800h15l6.500 6.500v9h-21.500z" fill="url(#pg)" stroke="#6f97d0" stroke-width="1.100"/><path d="M22.800 12.800v6.500h6.500z" fill="#f4f8fd" stroke="#6f97d0" stroke-width=".9"/>
<path d="M11 17.500h10M11 19.500h10M11 21.500h15M11 23.500h15" stroke="#8fb0da" stroke-width=".9"/>
<path d="M21 4.400 A5.400 5.400 0 0 1 26.400 9.800" fill="none" stroke="url(#ga)" stroke-width="2.800"/>
<path d="M18 4.400 L21.800 .9 L21.800 7.900 Z" fill="#3db52a"/>
<path d="M26.400 13 L22.900 9.300 L29.900 9.300 Z" fill="#1f8a10"/>
</svg>
<div class="t c" style="left:1079px;width:60px;top:90px">Seite</div>
<div class="t c" style="left:1079px;width:60px;top:103px">einrichten</div>
<svg style="left:1144px;top:53px" width="18" height="17" viewBox="0 0 18 17">
<path d="M3 1.500h14M3 3.500h14" stroke="#3c3c44" stroke-width="1.100"/>
<path d="M11 6.500h6M11 8.500h6M11 10.500h6" stroke="#15151a" stroke-width="1.200"/>
<path d="M3 13.500h14M3 15.500h14" stroke="#15151a" stroke-width="1.200"/>
<path d="M1.300 1v2.500M1.300 13v2.500" stroke="#9aa3b5" stroke-width="1"/>
<path d="M9.500 5v7" stroke="#8d97ab" stroke-width="1.100"/>
<path d="M2 7.500h3v-2l3.300 3-3.300 3v-2h-3z" fill="#2f74d8" stroke="#2a62b8" stroke-width=".4"/>
</svg>
<div class="t" style="left:1165px;top:55px">Absatz</div>
<svg style="left:1145px;top:75px" width="17" height="17" viewBox="0 0 17 17">
<path d="M8 3.500h6M8 8.500h6M8 13.500h6" stroke="#555a66" stroke-width="1.100"/>
<text x="2.300" y="5.600" font-size="6.200" font-weight="bold" fill="#a80c0c" font-family="Liberation Sans" letter-spacing="0">1</text>
<text x="2.300" y="10.600" font-size="6.200" font-weight="bold" fill="#a80c0c" font-family="Liberation Sans" letter-spacing="0">2</text>
<text x="2.300" y="15.600" font-size="6.200" font-weight="bold" fill="#a80c0c" font-family="Liberation Sans" letter-spacing="0">3</text>
</svg>
<div class="t" style="left:1165px;top:77px;letter-spacing:-.35px">Nummerierung</div>
<svg style="left:1146px;top:98px" width="15" height="17" viewBox="0 0 15 17">
<rect x=".5" y=".5" width="13" height="15.500" fill="#fdfdfd" stroke="#8aa0b8" stroke-width="1"/>
<rect x="2" y="3" width="4" height="5" fill="#3a8ae0"/><rect x="8" y="9" width="4" height="5" fill="#3a8ae0"/>
<path d="M7 3.500h2" stroke="#d02020" stroke-width="1"/><path d="M9.500 3.500h2.500" stroke="#2fa32a" stroke-width="1"/>
<path d="M7 5.500h4" stroke="#222" stroke-width="1"/><path d="M7 7.500h1.500" stroke="#d8b020" stroke-width="1"/><path d="M9 7.500h3" stroke="#444" stroke-width="1" stroke-dasharray="1 .7"/>
<path d="M2 9.500h5" stroke="#2fa32a" stroke-width="1"/><path d="M2 11.500h5" stroke="#d8b020" stroke-width="1"/><path d="M2 13.500h2.500" stroke="#222" stroke-width="1"/><path d="M4.500 13.500h2.500" stroke="#d02020" stroke-width="1"/>
</svg>
<div class="t" style="left:1165px;top:99px">Styles</div>
<svg style="left:1247px;top:62px" width="13" height="16" viewBox="0 0 13 16">
<path d="M5.500 1h7v1.800h-1.700v12.700h-1.800v-12.700h-1.500v12.700h-1.800v-7.500a3.500 3.500 0 0 1-.2-7z" fill="#1a1a1a"/>
</svg>
<svg style="left:1247px;top:92px" width="17" height="17" viewBox="0 0 17 17">
<rect x=".5" y=".5" width="14" height="14" fill="#fff" stroke="#7d7d7d"/>
<path d="M.5 5h14M.5 10h14M5 .5v14M10 .5v14" stroke="#7d7d7d" stroke-width="1"/>
<circle cx="12" cy="12" r="4.300" fill="#3db02a" stroke="#1f7d10" stroke-width=".7"/>
<path d="M9.800 12l1.600 1.700 2.800-3.200" fill="none" stroke="#fff" stroke-width="1.300"/>
</svg>

<div class="a" id="mainborder"></div>
<div class="a" id="leftpanel"></div>
<div class="a" id="dbl"></div>
<svg style="left:9px;top:157px" width="14" height="11" viewBox="0 0 14 11"><path d="M1 1l4 4-4 4M6.500 1l4 4-4 4" fill="none" stroke="#111" stroke-width="1.400"/></svg>
<div class="a" style="left:11px;top:665.500px;width:160px;height:14px;line-height:14px;transform-origin:0 0;transform:rotate(-90deg);font-weight:bold;font-size:11.500px;letter-spacing:.08px;white-space:nowrap;color:#111">Bestellungen Detailansicht</div>
<div class="a" style="left:33px;top:151px;width:14px;height:13px;background:#fff;border:1px solid #b8b8b8"></div>
<svg style="left:37px;top:154px" width="7" height="8" viewBox="0 0 7 8"><path d="M1.500 0v5.500h4.500" fill="none" stroke="#000" stroke-width="2"/></svg>
<div class="a" style="left:67px;top:151px;width:899px;height:14px;background:#efefef"></div>
<div class="a" style="left:128px;top:151px;width:776px;height:14px;background:#fff"></div>
<svg style="left:0;top:147px" width="980" height="26" viewBox="0 0 980 26"><path d="M68.5 8v8.500" stroke="#6e6e6e" stroke-width="1"/><text x="70.3" y="11.800" font-size="9.800" fill="#857d72" font-family="Liberation Sans" letter-spacing="-.4">2</text><path d="M71.5 14.5v2" stroke="#6e6e6e" stroke-width="1"/><path d="M74.5 14.5v2" stroke="#6e6e6e" stroke-width="1"/><path d="M77.5 14.5v2" stroke="#6e6e6e" stroke-width="1"/><path d="M80.5 14.5v2" stroke="#6e6e6e" stroke-width="1"/><path d="M83.5 12.5v4" stroke="#6e6e6e" stroke-width="1"/><path d="M86.5 14.5v2" stroke="#6e6e6e" stroke-width="1"/><path d="M89.5 14.5v2" stroke="#6e6e6e" stroke-width="1"/><path d="M92.5 14.5v2" stroke="#6e6e6e" stroke-width="1"/><path d="M95.5 14.5v2" stroke="#6e6e6e" stroke-width="1"/><path d="M98.5 8v8.500" stroke="#6e6e6e" stroke-width="1"/><text x="100.3" y="11.800" font-size="9.800" fill="#857d72" font-family="Liberation Sans" letter-spacing="-.4">1</text><path d="M101.5 14.5v2" stroke="#6e6e6e" stroke-width="1"/><path d="M104.5 14.5v2" stroke="#6e6e6e" stroke-width="1"/><path d="M107.5 14.5v2" stroke="#6e6e6e" stroke-width="1"/><path d="M110.5 14.5v2" stroke="#6e6e6e" stroke-width="1"/><path d="M113.5 12.5v4" stroke="#6e6e6e" stroke-width="1"/><path d="M116.5 14.5v2" stroke="#6e6e6e" stroke-width="1"/><path d="M119.5 14.5v2" stroke="#6e6e6e" stroke-width="1"/><path d="M122.5 14.5v2" stroke="#6e6e6e" stroke-width="1"/><path d="M125.5 14.5v2" stroke="#6e6e6e" stroke-width="1"/><path d="M128.5 8v8.500" stroke="#6e6e6e" stroke-width="1"/><path d="M131.5 14.5v2" stroke="#6e6e6e" stroke-width="1"/><path d="M134.5 14.5v2" stroke="#6e6e6e" stroke-width="1"/><path d="M137.5 14.5v2" stroke="#6e6e6e" stroke-width="1"/><path d="M140.5 14.5v2" stroke="#6e6e6e" stroke-width="1"/><path d="M143.5 12.5v4" stroke="#6e6e6e" stroke-width="1"/><path d="M146.5 14.5v2" stroke="#6e6e6e" stroke-width="1"/><path d="M149.5 14.5v2" stroke="#6e6e6e" stroke-width="1"/><path d="M152.5 14.5v2" stroke="#6e6e6e" stroke-width="1"/><path d="M155.5 14.5v2" stroke="#6e6e6e" stroke-width="1"/><path d="M158.5 8v8.500" stroke="#6e6e6e" stroke-width="1"/><text x="160.3" y="11.800" font-size="9.800" fill="#857d72" font-family="Liberation Sans" letter-spacing="-.4">1</text><path d="M161.5 14.5v2" stroke="#6e6e6e" stroke-width="1"/><path d="M164.5 14.5v2" stroke="#6e6e6e" stroke-width="1"/><path d="M167.5 14.5v2" stroke="#6e6e6e" stroke-width="1"/><path d="M170.5 14.5v2" stroke="#6e6e6e" stroke-width="1"/><path d="M173.5 12.5v4" stroke="#6e6e6e" stroke-width="1"/><path d="M176.5 14.5v2" stroke="#6e6e6e" stroke-width="1"/><path d="M179.5 14.5v2" stroke="#6e6e6e" stroke-width="1"/><path d="M182.5 14.5v2" stroke="#6e6e6e" stroke-width="1"/><path d="M185.5 14.5v2" stroke="#6e6e6e" stroke-width="1"/><path d="M188.5 8v8.500" stroke="#6e6e6e" stroke-width="1"/><text x="190.3" y="11.800" font-size="9.800" fill="#857d72" font-family="Liberation Sans" letter-spacing="-.4">2</text><path d="M192.5 14.5v2" stroke="#6e6e6e" stroke-width="1"/><path d="M195.5 14.5v2" stroke="#6e6e6e" stroke-width="1"/><path d="M198.5 14.5v2" stroke="#6e6e6e" stroke-width="1"/><path d="M201.5 14.5v2" stroke="#6e6e6e" stroke-width="1"/><path d="M204.5 12.5v4" stroke="#6e6e6e" stroke-width="1"/><path d="M207.5 14.5v2" stroke="#6e6e6e" stroke-width="1"/><path d="M210.5 14.5v2" stroke="#6e6e6e" stroke-width="1"/><path d="M213.5 14.5v2" stroke="#6e6e6e" stroke-width="1"/><path d="M216.5 14.5v2" stroke="#6e6e6e" stroke-width="1"/><path d="M219.5 8v8.500" stroke="#6e6e6e" stroke-width="1"/><text x="221.3" y="11.800" font-size="9.800" fill="#857d72" font-family="Liberation Sans" letter-spacing="-.4">3</text><path d="M222.5 14.5v2" stroke="#6e6e6e" stroke-width="1"/><path d="M225.5 14.5v2" stroke="#6e6e6e" stroke-width="1"/><path d="M228.5 14.5v2" stroke="#6e6e6e" stroke-width="1"/><path d="M231.5 14.5v2" stroke="#6e6e6e" stroke-width="1"/><path d="M234.5 12.5v4" stroke="#6e6e6e" stroke-width="1"/><path d="M237.5 14.5v2" stroke="#6e6e6e" stroke-width="1"/><path d="M240.5 14.5v2" stroke="#6e6e6e" stroke-width="1"/><path d="M243.5 14.5v2" stroke="#6e6e6e" stroke-width="1"/><path d="M246.5 14.5v2" stroke="#6e6e6e" stroke-width="1"/><path d="M249.5 8v8.500" stroke="#6e6e6e" stroke-width="1"/><text x="251.3" y="11.800" font-size="9.800" fill="#857d72" font-family="Liberation Sans" letter-spacing="-.4">4</text><path d="M252.5 14.5v2" stroke="#6e6e6e" stroke-width="1"/><path d="M255.5 14.5v2" stroke="#6e6e6e" stroke-width="1"/><path d="M258.5 14.5v2" stroke="#6e6e6e" stroke-width="1"/><path d="M261.5 14.5v2" stroke="#6e6e6e" stroke-width="1"/><path d="M264.5 12.5v4" stroke="#6e6e6e" stroke-width="1"/><path d="M267.5 14.5v2" stroke="#6e6e6e" stroke-width="1"/><path d="M270.5 14.5v2" stroke="#6e6e6e" stroke-width="1"/><path d="M273.5 14.5v2" stroke="#6e6e6e" stroke-width="1"/><path d="M276.5 14.5v2" stroke="#6e6e6e" stroke-width="1"/><path d="M279.5 8v8.500" stroke="#6e6e6e" stroke-width="1"/><text x="281.3" y="11.800" font-size="9.800" fill="#857d72" font-family="Liberation Sans" letter-spacing="-.4">5</text><path d="M282.5 14.5v2" stroke="#6e6e6e" stroke-width="1"/><path d="M285.5 14.5v2" stroke="#6e6e6e" stroke-width="1"/><path d="M288.5 14.5v2" stroke="#6e6e6e" stroke-width="1"/><path d="M291.5 14.5v2" stroke="#6e6e6e" stroke-width="1"/><path d="M294.5 12.5v4" stroke="#6e6e6e" stroke-width="1"/><path d="M297.5 14.5v2" stroke="#6e6e6e" stroke-width="1"/><path d="M300.5 14.5v2" stroke="#6e6e6e" stroke-width="1"/><path d="M303.5 14.5v2" stroke="#6e6e6e" stroke-width="1"/><path d="M306.5 14.5v2" stroke="#6e6e6e" stroke-width="1"/><path d="M309.5 8v8.500" stroke="#6e6e6e" stroke-width="1"/><text x="311.3" y="11.800" font-size="9.800" fill="#857d72" font-family="Liberation Sans" letter-spacing="-.4">6</text><path d="M312.5 14.5v2" stroke="#6e6e6e" stroke-width="1"/><path d="M315.5 14.5v2" stroke="#6e6e6e" stroke-width="1"/><path d="M319.5 14.5v2" stroke="#6e6e6e" stroke-width="1"/><path d="M322.5 14.5v2" stroke="#6e6e6e" stroke-width="1"/><path d="M325.5 12.5v4" stroke="#6e6e6e" stroke-width="1"/><path d="M328.5 14.5v2" stroke="#6e6e6e" stroke-width="1"/><path d="M331.5 14.5v2" stroke="#6e6e6e" stroke-width="1"/><path d="M334.5 14.5v2" stroke="#6e6e6e" stroke-width="1"/><path d="M337.5 14.5v2" stroke="#6e6e6e" stroke-width="1"/><path d="M340.5 8v8.500" stroke="#6e6e6e" stroke-width="1"/><text x="342.3" y="11.800" font-size="9.800" fill="#857d72" font-family="Liberation Sans" letter-spacing="-.4">7</text><path d="M343.5 14.5v2" stroke="#6e6e6e" stroke-width="1"/><path d="M346.5 14.5v2" stroke="#6e6e6e" stroke-width="1"/><path d="M349.5 14.5v2" stroke="#6e6e6e" stroke-width="1"/><path d="M352.5 14.5v2" stroke="#6e6e6e" stroke-width="1"/><path d="M355.5 12.5v4" stroke="#6e6e6e" stroke-width="1"/><path d="M358.5 14.5v2" stroke="#6e6e6e" stroke-width="1"/><path d="M361.5 14.5v2" stroke="#6e6e6e" stroke-width="1"/><path d="M364.5 14.5v2" stroke="#6e6e6e" stroke-width="1"/><path d="M367.5 14.5v2" stroke="#6e6e6e" stroke-width="1"/><path d="M370.5 8v8.500" stroke="#6e6e6e" stroke-width="1"/><text x="372.3" y="11.800" font-size="9.800" fill="#857d72" font-family="Liberation Sans" letter-spacing="-.4">8</text><path d="M373.5 14.5v2" stroke="#6e6e6e" stroke-width="1"/><path d="M376.5 14.5v2" stroke="#6e6e6e" stroke-width="1"/><path d="M379.5 14.5v2" stroke="#6e6e6e" stroke-width="1"/><path d="M382.5 14.5v2" stroke="#6e6e6e" stroke-width="1"/><path d="M385.5 12.5v4" stroke="#6e6e6e" stroke-width="1"/><path d="M388.5 14.5v2" stroke="#6e6e6e" stroke-width="1"/><path d="M391.5 14.5v2" stroke="#6e6e6e" stroke-width="1"/><path d="M394.5 14.5v2" stroke="#6e6e6e" stroke-width="1"/><path d="M397.5 14.5v2" stroke="#6e6e6e" stroke-width="1"/><path d="M400.5 8v8.500" stroke="#6e6e6e" stroke-width="1"/><text x="402.3" y="11.800" font-size="9.800" fill="#857d72" font-family="Liberation Sans" letter-spacing="-.4">9</text><path d="M403.5 14.5v2" stroke="#6e6e6e" stroke-width="1"/><path d="M406.5 14.5v2" stroke="#6e6e6e" stroke-width="1"/><path d="M409.5 14.5v2" stroke="#6e6e6e" stroke-width="1"/><path d="M412.5 14.5v2" stroke="#6e6e6e" stroke-width="1"/><path d="M415.5 12.5v4" stroke="#6e6e6e" stroke-width="1"/><path d="M418.5 14.5v2" stroke="#6e6e6e" stroke-width="1"/><path d="M421.5 14.5v2" stroke="#6e6e6e" stroke-width="1"/><path d="M424.5 14.5v2" stroke="#6e6e6e" stroke-width="1"/><path d="M427.5 14.5v2" stroke="#6e6e6e" stroke-width="1"/><path d="M430.5 8v8.500" stroke="#6e6e6e" stroke-width="1"/><text x="432.3" y="11.800" font-size="9.800" fill="#857d72" font-family="Liberation Sans" letter-spacing="-.4">10</text><path d="M433.5 14.5v2" stroke="#6e6e6e" stroke-width="1"/><path d="M436.5 14.5v2" stroke="#6e6e6e" stroke-width="1"/><path d="M439.5 14.5v2" stroke="#6e6e6e" stroke-width="1"/><path d="M442.5 14.5v2" stroke="#6e6e6e" stroke-width="1"/><path d="M446.5 12.5v4" stroke="#6e6e6e" stroke-width="1"/><path d="M449.5 14.5v2" stroke="#6e6e6e" stroke-width="1"/><path d="M452.5 14.5v2" stroke="#6e6e6e" stroke-width="1"/><path d="M455.5 14.5v2" stroke="#6e6e6e" stroke-width="1"/><path d="M458.5 14.5v2" stroke="#6e6e6e" stroke-width="1"/><path d="M461.5 8v8.500" stroke="#6e6e6e" stroke-width="1"/><text x="463.3" y="11.800" font-size="9.800" fill="#857d72" font-family="Liberation Sans" letter-spacing="-.4">11</text><path d="M464.5 14.5v2" stroke="#6e6e6e" stroke-width="1"/><path d="M467.5 14.5v2" stroke="#6e6e6e" stroke-width="1"/><path d="M470.5 14.5v2" stroke="#6e6e6e" stroke-width="1"/><path d="M473.5 14.5v2" stroke="#6e6e6e" stroke-width="1"/><path d="M476.5 12.5v4" stroke="#6e6e6e" stroke-width="1"/><path d="M479.5 14.5v2" stroke="#6e6e6e" stroke-width="1"/><path d="M482.5 14.5v2" stroke="#6e6e6e" stroke-width="1"/><path d="M485.5 14.5v2" stroke="#6e6e6e" stroke-width="1"/><path d="M488.5 14.5v2" stroke="#6e6e6e" stroke-width="1"/><path d="M491.5 8v8.500" stroke="#6e6e6e" stroke-width="1"/><text x="493.3" y="11.800" font-size="9.800" fill="#857d72" font-family="Liberation Sans" letter-spacing="-.4">12</text><path d="M494.5 14.5v2" stroke="#6e6e6e" stroke-width="1"/><path d="M497.5 14.5v2" stroke="#6e6e6e" stroke-width="1"/><path d="M500.5 14.5v2" stroke="#6e6e6e" stroke-width="1"/><path d="M503.5 14.5v2" stroke="#6e6e6e" stroke-width="1"/><path d="M506.5 12.5v4" stroke="#6e6e6e" stroke-width="1"/><path d="M509.5 14.5v2" stroke="#6e6e6e" stroke-width="1"/><path d="M512.5 14.5v2" stroke="#6e6e6e" stroke-width="1"/><path d="M515.5 14.5v2" stroke="#6e6e6e" stroke-width="1"/><path d="M518.5 14.5v2" stroke="#6e6e6e" stroke-width="1"/><path d="M521.5 8v8.500" stroke="#6e6e6e" stroke-width="1"/><text x="523.3" y="11.800" font-size="9.800" fill="#857d72" font-family="Liberation Sans" letter-spacing="-.4">13</text><path d="M524.5 14.5v2" stroke="#6e6e6e" stroke-width="1"/><path d="M527.5 14.5v2" stroke="#6e6e6e" stroke-width="1"/><path d="M530.5 14.5v2" stroke="#6e6e6e" stroke-width="1"/><path d="M533.5 14.5v2" stroke="#6e6e6e" stroke-width="1"/><path d="M536.5 12.5v4" stroke="#6e6e6e" stroke-width="1"/><path d="M539.5 14.5v2" stroke="#6e6e6e" stroke-width="1"/><path d="M542.5 14.5v2" stroke="#6e6e6e" stroke-width="1"/><path d="M545.5 14.5v2" stroke="#6e6e6e" stroke-width="1"/><path d="M548.5 14.5v2" stroke="#6e6e6e" stroke-width="1"/><path d="M551.5 8v8.500" stroke="#6e6e6e" stroke-width="1"/><text x="553.3" y="11.800" font-size="9.800" fill="#857d72" font-family="Liberation Sans" letter-spacing="-.4">14</text><path d="M554.5 14.5v2" stroke="#6e6e6e" stroke-width="1"/><path d="M557.5 14.5v2" stroke="#6e6e6e" stroke-width="1"/><path d="M560.5 14.5v2" stroke="#6e6e6e" stroke-width="1"/><path d="M563.5 14.5v2" stroke="#6e6e6e" stroke-width="1"/><path d="M566.5 12.5v4" stroke="#6e6e6e" stroke-width="1"/><path d="M570.5 14.5v2" stroke="#6e6e6e" stroke-width="1"/><path d="M573.5 14.5v2" stroke="#6e6e6e" stroke-width="1"/><path d="M576.5 14.5v2" stroke="#6e6e6e" stroke-width="1"/><path d="M579.5 14.5v2" stroke="#6e6e6e" stroke-width="1"/><path d="M582.5 8v8.500" stroke="#6e6e6e" stroke-width="1"/><text x="584.3" y="11.800" font-size="9.800" fill="#857d72" font-family="Liberation Sans" letter-spacing="-.4">15</text><path d="M585.5 14.5v2" stroke="#6e6e6e" stroke-width="1"/><path d="M588.5 14.5v2" stroke="#6e6e6e" stroke-width="1"/><path d="M591.5 14.5v2" stroke="#6e6e6e" stroke-width="1"/><path d="M594.5 14.5v2" stroke="#6e6e6e" stroke-width="1"/><path d="M597.5 12.5v4" stroke="#6e6e6e" stroke-width="1"/><path d="M600.5 14.5v2" stroke="#6e6e6e" stroke-width="1"/><path d="M603.5 14.5v2" stroke="#6e6e6e" stroke-width="1"/><path d="M606.5 14.5v2" stroke="#6e6e6e" stroke-width="1"/><path d="M609.5 14.5v2" stroke="#6e6e6e" stroke-width="1"/><path d="M612.5 8v8.500" stroke="#6e6e6e" stroke-width="1"/><text x="614.3" y="11.800" font-size="9.800" fill="#857d72" font-family="Liberation Sans" letter-spacing="-.4">16</text><path d="M615.5 14.5v2" stroke="#6e6e6e" stroke-width="1"/><path d="M618.5 14.5v2" stroke="#6e6e6e" stroke-width="1"/><path d="M621.5 14.5v2" stroke="#6e6e6e" stroke-width="1"/><path d="M624.5 14.5v2" stroke="#6e6e6e" stroke-width="1"/><path d="M627.5 12.5v4" stroke="#6e6e6e" stroke-width="1"/><path d="M630.5 14.5v2" stroke="#6e6e6e" stroke-width="1"/><path d="M633.5 14.5v2" stroke="#6e6e6e" stroke-width="1"/><path d="M636.5 14.5v2" stroke="#6e6e6e" stroke-width="1"/><path d="M639.5 14.5v2" stroke="#6e6e6e" stroke-width="1"/><path d="M642.5 8v8.500" stroke="#6e6e6e" stroke-width="1"/><text x="644.3" y="11.800" font-size="9.800" fill="#857d72" font-family="Liberation Sans" letter-spacing="-.4">17</text><path d="M645.5 14.5v2" stroke="#6e6e6e" stroke-width="1"/><path d="M648.5 14.5v2" stroke="#6e6e6e" stroke-width="1"/><path d="M651.5 14.5v2" stroke="#6e6e6e" stroke-width="1"/><path d="M654.5 14.5v2" stroke="#6e6e6e" stroke-width="1"/><path d="M657.5 12.5v4" stroke="#6e6e6e" stroke-width="1"/><path d="M660.5 14.5v2" stroke="#6e6e6e" stroke-width="1"/><path d="M663.5 14.5v2" stroke="#6e6e6e" stroke-width="1"/><path d="M666.5 14.5v2" stroke="#6e6e6e" stroke-width="1"/><path d="M669.5 14.5v2" stroke="#6e6e6e" stroke-width="1"/><path d="M672.5 8v8.500" stroke="#6e6e6e" stroke-width="1"/><text x="674.3" y="11.800" font-size="9.800" fill="#857d72" font-family="Liberation Sans" letter-spacing="-.4">18</text><path d="M675.5 14.5v2" stroke="#6e6e6e" stroke-width="1"/><path d="M678.5 14.5v2" stroke="#6e6e6e" stroke-width="1"/><path d="M681.5 14.5v2" stroke="#6e6e6e" stroke-width="1"/><path d="M684.5 14.5v2" stroke="#6e6e6e" stroke-width="1"/><path d="M687.5 12.5v4" stroke="#6e6e6e" stroke-width="1"/><path d="M690.5 14.5v2" stroke="#6e6e6e" stroke-width="1"/><path d="M693.5 14.5v2" stroke="#6e6e6e" stroke-width="1"/><path d="M697.5 14.5v2" stroke="#6e6e6e" stroke-width="1"/><path d="M700.5 14.5v2" stroke="#6e6e6e" stroke-width="1"/><path d="M703.5 8v8.500" stroke="#6e6e6e" stroke-width="1"/><text x="705.3" y="11.800" font-size="9.800" fill="#857d72" font-family="Liberation Sans" letter-spacing="-.4">19</text><path d="M706.5 14.5v2" stroke="#6e6e6e" stroke-width="1"/><path d="M709.5 14.5v2" stroke="#6e6e6e" stroke-width="1"/><path d="M712.5 14.5v2" stroke="#6e6e6e" stroke-width="1"/><path d="M715.5 14.5v2" stroke="#6e6e6e" stroke-width="1"/><path d="M718.5 12.5v4" stroke="#6e6e6e" stroke-width="1"/><path d="M721.5 14.5v2" stroke="#6e6e6e" stroke-width="1"/><path d="M724.5 14.5v2" stroke="#6e6e6e" stroke-width="1"/><path d="M727.5 14.5v2" stroke="#6e6e6e" stroke-width="1"/><path d="M730.5 14.5v2" stroke="#6e6e6e" stroke-width="1"/><path d="M733.5 8v8.500" stroke="#6e6e6e" stroke-width="1"/><text x="735.3" y="11.800" font-size="9.800" fill="#857d72" font-family="Liberation Sans" letter-spacing="-.4">20</text><path d="M736.5 14.5v2" stroke="#6e6e6e" stroke-width="1"/><path d="M739.5 14.5v2" stroke="#6e6e6e" stroke-width="1"/><path d="M742.5 14.5v2" stroke="#6e6e6e" stroke-width="1"/><path d="M745.5 14.5v2" stroke="#6e6e6e" stroke-width="1"/><path d="M748.5 12.5v4" stroke="#6e6e6e" stroke-width="1"/><path d="M751.5 14.5v2" stroke="#6e6e6e" stroke-width="1"/><path d="M754.5 14.5v2" stroke="#6e6e6e" stroke-width="1"/><path d="M757.5 14.5v2" stroke="#6e6e6e" stroke-width="1"/><path d="M760.5 14.5v2" stroke="#6e6e6e" stroke-width="1"/><path d="M763.5 8v8.500" stroke="#6e6e6e" stroke-width="1"/><text x="765.3" y="11.800" font-size="9.800" fill="#857d72" font-family="Liberation Sans" letter-spacing="-.4">21</text><path d="M766.5 14.5v2" stroke="#6e6e6e" stroke-width="1"/><path d="M769.5 14.5v2" stroke="#6e6e6e" stroke-width="1"/><path d="M772.5 14.5v2" stroke="#6e6e6e" stroke-width="1"/><path d="M775.5 14.5v2" stroke="#6e6e6e" stroke-width="1"/><path d="M778.5 12.5v4" stroke="#6e6e6e" stroke-width="1"/><path d="M781.5 14.5v2" stroke="#6e6e6e" stroke-width="1"/><path d="M784.5 14.5v2" stroke="#6e6e6e" stroke-width="1"/><path d="M787.5 14.5v2" stroke="#6e6e6e" stroke-width="1"/><path d="M790.5 14.5v2" stroke="#6e6e6e" stroke-width="1"/><path d="M793.5 8v8.500" stroke="#6e6e6e" stroke-width="1"/><text x="795.3" y="11.800" font-size="9.800" fill="#857d72" font-family="Liberation Sans" letter-spacing="-.4">22</text><path d="M796.5 14.5v2" stroke="#6e6e6e" stroke-width="1"/><path d="M799.5 14.5v2" stroke="#6e6e6e" stroke-width="1"/><path d="M802.5 14.5v2" stroke="#6e6e6e" stroke-width="1"/><path d="M805.5 14.5v2" stroke="#6e6e6e" stroke-width="1"/><path d="M808.5 12.5v4" stroke="#6e6e6e" stroke-width="1"/><path d="M811.5 14.5v2" stroke="#6e6e6e" stroke-width="1"/><path d="M814.5 14.5v2" stroke="#6e6e6e" stroke-width="1"/><path d="M817.5 14.5v2" stroke="#6e6e6e" stroke-width="1"/><path d="M820.5 14.5v2" stroke="#6e6e6e" stroke-width="1"/><path d="M824.5 8v8.500" stroke="#6e6e6e" stroke-width="1"/><text x="826.3" y="11.800" font-size="9.800" fill="#857d72" font-family="Liberation Sans" letter-spacing="-.4">23</text><path d="M827.5 14.5v2" stroke="#6e6e6e" stroke-width="1"/><path d="M830.5 14.5v2" stroke="#6e6e6e" stroke-width="1"/><path d="M833.5 14.5v2" stroke="#6e6e6e" stroke-width="1"/><path d="M836.5 14.5v2" stroke="#6e6e6e" stroke-width="1"/><path d="M839.5 12.5v4" stroke="#6e6e6e" stroke-width="1"/><path d="M842.5 14.5v2" stroke="#6e6e6e" stroke-width="1"/><path d="M845.5 14.5v2" stroke="#6e6e6e" stroke-width="1"/><path d="M848.5 14.5v2" stroke="#6e6e6e" stroke-width="1"/><path d="M851.5 14.5v2" stroke="#6e6e6e" stroke-width="1"/><path d="M854.5 8v8.500" stroke="#6e6e6e" stroke-width="1"/><text x="856.3" y="11.800" font-size="9.800" fill="#857d72" font-family="Liberation Sans" letter-spacing="-.4">24</text><path d="M857.5 14.5v2" stroke="#6e6e6e" stroke-width="1"/><path d="M860.5 14.5v2" stroke="#6e6e6e" stroke-width="1"/><path d="M863.5 14.5v2" stroke="#6e6e6e" stroke-width="1"/><path d="M866.5 14.5v2" stroke="#6e6e6e" stroke-width="1"/><path d="M869.5 12.5v4" stroke="#6e6e6e" stroke-width="1"/><path d="M872.5 14.5v2" stroke="#6e6e6e" stroke-width="1"/><path d="M875.5 14.5v2" stroke="#6e6e6e" stroke-width="1"/><path d="M878.5 14.5v2" stroke="#6e6e6e" stroke-width="1"/><path d="M881.5 14.5v2" stroke="#6e6e6e" stroke-width="1"/><path d="M884.5 8v8.500" stroke="#6e6e6e" stroke-width="1"/><text x="886.3" y="11.800" font-size="9.800" fill="#857d72" font-family="Liberation Sans" letter-spacing="-.4">25</text><path d="M887.5 14.5v2" stroke="#6e6e6e" stroke-width="1"/><path d="M890.5 14.5v2" stroke="#6e6e6e" stroke-width="1"/><path d="M893.5 14.5v2" stroke="#6e6e6e" stroke-width="1"/><path d="M896.5 14.5v2" stroke="#6e6e6e" stroke-width="1"/><path d="M899.5 12.5v4" stroke="#6e6e6e" stroke-width="1"/><path d="M902.5 14.5v2" stroke="#6e6e6e" stroke-width="1"/><path d="M905.5 14.5v2" stroke="#6e6e6e" stroke-width="1"/><path d="M908.5 14.5v2" stroke="#6e6e6e" stroke-width="1"/><path d="M911.5 14.5v2" stroke="#6e6e6e" stroke-width="1"/><path d="M914.5 8v8.500" stroke="#6e6e6e" stroke-width="1"/><text x="916.3" y="11.800" font-size="9.800" fill="#857d72" font-family="Liberation Sans" letter-spacing="-.4">26</text><path d="M917.5 14.5v2" stroke="#6e6e6e" stroke-width="1"/><path d="M920.5 14.5v2" stroke="#6e6e6e" stroke-width="1"/><path d="M923.5 14.5v2" stroke="#6e6e6e" stroke-width="1"/><path d="M926.5 14.5v2" stroke="#6e6e6e" stroke-width="1"/><path d="M929.5 12.5v4" stroke="#6e6e6e" stroke-width="1"/><path d="M932.5 14.5v2" stroke="#6e6e6e" stroke-width="1"/><path d="M935.5 14.5v2" stroke="#6e6e6e" stroke-width="1"/><path d="M938.5 14.5v2" stroke="#6e6e6e" stroke-width="1"/><path d="M941.5 14.5v2" stroke="#6e6e6e" stroke-width="1"/><path d="M944.5 8v8.500" stroke="#6e6e6e" stroke-width="1"/><text x="946.3" y="11.800" font-size="9.800" fill="#857d72" font-family="Liberation Sans" letter-spacing="-.4">27</text><path d="M948.5 14.5v2" stroke="#6e6e6e" stroke-width="1"/><path d="M951.5 14.5v2" stroke="#6e6e6e" stroke-width="1"/><path d="M954.5 14.5v2" stroke="#6e6e6e" stroke-width="1"/><path d="M957.5 14.5v2" stroke="#6e6e6e" stroke-width="1"/><path d="M960.5 12.5v4" stroke="#6e6e6e" stroke-width="1"/><path d="M963.5 14.5v2" stroke="#6e6e6e" stroke-width="1"/><path d="M189 17v5h4.500" fill="none" stroke="#4a4a4a" stroke-width="2"/><path d="M250 17v5h4.500" fill="none" stroke="#4a4a4a" stroke-width="2"/><path d="M310 17v5h4.500" fill="none" stroke="#4a4a4a" stroke-width="2"/><path d="M371 17v5h4.500" fill="none" stroke="#4a4a4a" stroke-width="2"/><path d="M431 17v5h4.500" fill="none" stroke="#4a4a4a" stroke-width="2"/><path d="M492 17v5h4.500" fill="none" stroke="#4a4a4a" stroke-width="2"/><path d="M552 17v5h4.500" fill="none" stroke="#4a4a4a" stroke-width="2"/><path d="M613 17v5h4.500" fill="none" stroke="#4a4a4a" stroke-width="2"/><path d="M673 17v5h4.500" fill="none" stroke="#4a4a4a" stroke-width="2"/><path d="M734 17v5h4.500" fill="none" stroke="#4a4a4a" stroke-width="2"/><path d="M794 17v5h4.500" fill="none" stroke="#4a4a4a" stroke-width="2"/><path d="M855 17v5h4.500" fill="none" stroke="#4a4a4a" stroke-width="2"/><path d="M127.500 4.500v11.500 M127.500 5l4.500 5h-4.500z" fill="#666" stroke="#666" stroke-width="1"/><path d="M119 21.500h8M124 19l3 2.500-3 2.500M128.500 18v7" fill="none" stroke="#555" stroke-width="1.300"/><path d="M904.500 4.500v11.500 M904.500 5l-4.500 5h4.500z M904.500 13l-3 2.500h3z" fill="#555" stroke="#555" stroke-width="1"/><path d="M914 21.500h-8M909 19l-3 2.500 3 2.500M905.500 18v7" fill="none" stroke="#555" stroke-width="1.300"/></svg>
<div class="a" id="docbg"></div>
<div class="a" style="left:36px;top:203px;width:15px;height:635px;background:#fff"></div>
<div class="a" style="left:37px;top:204px;width:13px;height:7px;background:#efefef"></div>
<div class="a" style="left:37px;top:830px;width:13px;height:7px;background:#efefef"></div>
<svg style="left:31px;top:172px" width="26" height="680" viewBox="0 0 26 680"><path d="M9 40.5h8" stroke="#6e6e6e" stroke-width="1"/><path d="M15 43.5h2" stroke="#6e6e6e" stroke-width="1"/><path d="M15 46.5h2" stroke="#6e6e6e" stroke-width="1"/><path d="M15 49.5h2" stroke="#6e6e6e" stroke-width="1"/><path d="M15 52.5h2" stroke="#6e6e6e" stroke-width="1"/><path d="M13 55.5h4" stroke="#6e6e6e" stroke-width="1"/><path d="M15 58.5h2" stroke="#6e6e6e" stroke-width="1"/><path d="M15 61.5h2" stroke="#6e6e6e" stroke-width="1"/><path d="M15 64.5h2" stroke="#6e6e6e" stroke-width="1"/><path d="M15 67.5h2" stroke="#6e6e6e" stroke-width="1"/><path d="M9 70.5h8" stroke="#6e6e6e" stroke-width="1"/><text transform="translate(12.800 72.3) rotate(-90)" x="0" y="0" font-size="9.800" fill="#857d72" font-family="Liberation Sans" letter-spacing="-.4" text-anchor="end">1</text><path d="M15 73.5h2" stroke="#6e6e6e" stroke-width="1"/><path d="M15 76.5h2" stroke="#6e6e6e" stroke-width="1"/><path d="M15 79.5h2" stroke="#6e6e6e" stroke-width="1"/><path d="M15 82.5h2" stroke="#6e6e6e" stroke-width="1"/><path d="M13 85.5h4" stroke="#6e6e6e" stroke-width="1"/><path d="M15 88.5h2" stroke="#6e6e6e" stroke-width="1"/><path d="M15 91.5h2" stroke="#6e6e6e" stroke-width="1"/><path d="M15 94.5h2" stroke="#6e6e6e" stroke-width="1"/><path d="M15 97.5h2" stroke="#6e6e6e" stroke-width="1"/><path d="M9 100.5h8" stroke="#6e6e6e" stroke-width="1"/><text transform="translate(12.800 102.3) rotate(-90)" x="0" y="0" font-size="9.800" fill="#857d72" font-family="Liberation Sans" letter-spacing="-.4" text-anchor="end">2</text><path d="M15 104.5h2" stroke="#6e6e6e" stroke-width="1"/><path d="M15 107.5h2" stroke="#6e6e6e" stroke-width="1"/><path d="M15 110.5h2" stroke="#6e6e6e" stroke-width="1"/><path d="M15 113.5h2" stroke="#6e6e6e" stroke-width="1"/><path d="M13 116.5h4" stroke="#6e6e6e" stroke-width="1"/><path d="M15 119.5h2" stroke="#6e6e6e" stroke-width="1"/><path d="M15 122.5h2" stroke="#6e6e6e" stroke-width="1"/><path d="M15 125.5h2" stroke="#6e6e6e" stroke-width="1"/><path d="M15 128.5h2" stroke="#6e6e6e" stroke-width="1"/><path d="M9 131.5h8" stroke="#6e6e6e" stroke-width="1"/><text transform="translate(12.800 133.3) rotate(-90)" x="0" y="0" font-size="9.800" fill="#857d72" font-family="Liberation Sans" letter-spacing="-.4" text-anchor="end">3</text><path d="M15 134.5h2" stroke="#6e6e6e" stroke-width="1"/><path d="M15 137.5h2" stroke="#6e6e6e" stroke-width="1"/><path d="M15 140.5h2" stroke="#6e6e6e" stroke-width="1"/><path d="M15 143.5h2" stroke="#6e6e6e" stroke-width="1"/><path d="M13 146.5h4" stroke="#6e6e6e" stroke-width="1"/><path d="M15 149.5h2" stroke="#6e6e6e" stroke-width="1"/><path d="M15 152.5h2" stroke="#6e6e6e" stroke-width="1"/><path d="M15 155.5h2" stroke="#6e6e6e" stroke-width="1"/><path d="M15 158.5h2" stroke="#6e6e6e" stroke-width="1"/><path d="M9 161.5h8" stroke="#6e6e6e" stroke-width="1"/><text transform="translate(12.800 163.3) rotate(-90)" x="0" y="0" font-size="9.800" fill="#857d72" font-family="Liberation Sans" letter-spacing="-.4" text-anchor="end">4</text><path d="M15 164.5h2" stroke="#6e6e6e" stroke-width="1"/><path d="M15 167.5h2" stroke="#6e6e6e" stroke-width="1"/><path d="M15 170.5h2" stroke="#6e6e6e" stroke-width="1"/><path d="M15 173.5h2" stroke="#6e6e6e" stroke-width="1"/><path d="M13 176.5h4" stroke="#6e6e6e" stroke-width="1"/><path d="M15 179.5h2" stroke="#6e6e6e" stroke-width="1"/><path d="M15 182.5h2" stroke="#6e6e6e" stroke-width="1"/><path d="M15 185.5h2" stroke="#6e6e6e" stroke-width="1"/><path d="M15 188.5h2" stroke="#6e6e6e" stroke-width="1"/><path d="M9 191.5h8" stroke="#6e6e6e" stroke-width="1"/><text transform="translate(12.800 193.3) rotate(-90)" x="0" y="0" font-size="9.800" fill="#857d72" font-family="Liberation Sans" letter-spacing="-.4" text-anchor="end">5</text><path d="M15 194.5h2" stroke="#6e6e6e" stroke-width="1"/><path d="M15 197.5h2" stroke="#6e6e6e" stroke-width="1"/><path d="M15 200.5h2" stroke="#6e6e6e" stroke-width="1"/><path d="M15 203.5h2" stroke="#6e6e6e" stroke-width="1"/><path d="M13 206.5h4" stroke="#6e6e6e" stroke-width="1"/><path d="M15 209.5h2" stroke="#6e6e6e" stroke-width="1"/><path d="M15 212.5h2" stroke="#6e6e6e" stroke-width="1"/><path d="M15 215.5h2" stroke="#6e6e6e" stroke-width="1"/><path d="M15 218.5h2" stroke="#6e6e6e" stroke-width="1"/><path d="M9 221.5h8" stroke="#6e6e6e" stroke-width="1"/><text transform="translate(12.800 223.3) rotate(-90)" x="0" y="0" font-size="9.800" fill="#857d72" font-family="Liberation Sans" letter-spacing="-.4" text-anchor="end">6</text><path d="M15 224.5h2" stroke="#6e6e6e" stroke-width="1"/><path d="M15 227.5h2" stroke="#6e6e6e" stroke-width="1"/><path d="M15 231.5h2" stroke="#6e6e6e" stroke-width="1"/><path d="M15 234.5h2" stroke="#6e6e6e" stroke-width="1"/><path d="M13 237.5h4" stroke="#6e6e6e" stroke-width="1"/><path d="M15 240.5h2" stroke="#6e6e6e" stroke-width="1"/><path d="M15 243.5h2" stroke="#6e6e6e" stroke-width="1"/><path d="M15 246.5h2" stroke="#6e6e6e" stroke-width="1"/><path d="M15 249.5h2" stroke="#6e6e6e" stroke-width="1"/><path d="M9 252.5h8" stroke="#6e6e6e" stroke-width="1"/><text transform="translate(12.800 254.3) rotate(-90)" x="0" y="0" font-size="9.800" fill="#857d72" font-family="Liberation Sans" letter-spacing="-.4" text-anchor="end">7</text><path d="M15 255.5h2" stroke="#6e6e6e" stroke-width="1"/><path d="M15 258.5h2" stroke="#6e6e6e" stroke-width="1"/><path d="M15 261.5h2" stroke="#6e6e6e" stroke-width="1"/><path d="M15 264.5h2" stroke="#6e6e6e" stroke-width="1"/><path d="M13 267.5h4" stroke="#6e6e6e" stroke-width="1"/><path d="M15 270.5h2" stroke="#6e6e6e" stroke-width="1"/><path d="M15 273.5h2" stroke="#6e6e6e" stroke-width="1"/><path d="M15 276.5h2" stroke="#6e6e6e" stroke-width="1"/><path d="M15 279.5h2" stroke="#6e6e6e" stroke-width="1"/><path d="M9 282.5h8" stroke="#6e6e6e" stroke-width="1"/><text transform="translate(12.800 284.3) rotate(-90)" x="0" y="0" font-size="9.800" fill="#857d72" font-family="Liberation Sans" letter-spacing="-.4" text-anchor="end">8</text><path d="M15 285.5h2" stroke="#6e6e6e" stroke-width="1"/><path d="M15 288.5h2" stroke="#6e6e6e" stroke-width="1"/><path d="M15 291.5h2" stroke="#6e6e6e" stroke-width="1"/><path d="M15 294.5h2" stroke="#6e6e6e" stroke-width="1"/><path d="M13 297.5h4" stroke="#6e6e6e" stroke-width="1"/><path d="M15 300.5h2" stroke="#6e6e6e" stroke-width="1"/><path d="M15 303.5h2" stroke="#6e6e6e" stroke-width="1"/><path d="M15 306.5h2" stroke="#6e6e6e" stroke-width="1"/><path d="M15 309.5h2" stroke="#6e6e6e" stroke-width="1"/><path d="M9 312.5h8" stroke="#6e6e6e" stroke-width="1"/><text transform="translate(12.800 314.3) rotate(-90)" x="0" y="0" font-size="9.800" fill="#857d72" font-family="Liberation Sans" letter-spacing="-.4" text-anchor="end">9</text><path d="M15 315.5h2" stroke="#6e6e6e" stroke-width="1"/><path d="M15 318.5h2" stroke="#6e6e6e" stroke-width="1"/><path d="M15 321.5h2" stroke="#6e6e6e" stroke-width="1"/><path d="M15 324.5h2" stroke="#6e6e6e" stroke-width="1"/><path d="M13 327.5h4" stroke="#6e6e6e" stroke-width="1"/><path d="M15 330.5h2" stroke="#6e6e6e" stroke-width="1"/><path d="M15 333.5h2" stroke="#6e6e6e" stroke-width="1"/><path d="M15 336.5h2" stroke="#6e6e6e" stroke-width="1"/><path d="M15 339.5h2" stroke="#6e6e6e" stroke-width="1"/><path d="M9 342.5h8" stroke="#6e6e6e" stroke-width="1"/><text transform="translate(12.800 344.3) rotate(-90)" x="0" y="0" font-size="9.800" fill="#857d72" font-family="Liberation Sans" letter-spacing="-.4" text-anchor="end">10</text><path d="M15 345.5h2" stroke="#6e6e6e" stroke-width="1"/><path d="M15 348.5h2" stroke="#6e6e6e" stroke-width="1"/><path d="M15 351.5h2" stroke="#6e6e6e" stroke-width="1"/><path d="M15 354.5h2" stroke="#6e6e6e" stroke-width="1"/><path d="M13 358.5h4" stroke="#6e6e6e" stroke-width="1"/><path d="M15 361.5h2" stroke="#6e6e6e" stroke-width="1"/><path d="M15 364.5h2" stroke="#6e6e6e" stroke-width="1"/><path d="M15 367.5h2" stroke="#6e6e6e" stroke-width="1"/><path d="M15 370.5h2" stroke="#6e6e6e" stroke-width="1"/><path d="M9 373.5h8" stroke="#6e6e6e" stroke-width="1"/><text transform="translate(12.800 375.3) rotate(-90)" x="0" y="0" font-size="9.800" fill="#857d72" font-family="Liberation Sans" letter-spacing="-.4" text-anchor="end">11</text><path d="M15 376.5h2" stroke="#6e6e6e" stroke-width="1"/><path d="M15 379.5h2" stroke="#6e6e6e" stroke-width="1"/><path d="M15 382.5h2" stroke="#6e6e6e" stroke-width="1"/><path d="M15 385.5h2" stroke="#6e6e6e" stroke-width="1"/><path d="M13 388.5h4" stroke="#6e6e6e" stroke-width="1"/><path d="M15 391.5h2" stroke="#6e6e6e" stroke-width="1"/><path d="M15 394.5h2" stroke="#6e6e6e" stroke-width="1"/><path d="M15 397.5h2" stroke="#6e6e6e" stroke-width="1"/><path d="M15 400.5h2" stroke="#6e6e6e" stroke-width="1"/><path d="M9 403.5h8" stroke="#6e6e6e" stroke-width="1"/><text transform="translate(12.800 405.3) rotate(-90)" x="0" y="0" font-size="9.800" fill="#857d72" font-family="Liberation Sans" letter-spacing="-.4" text-anchor="end">12</text><path d="M15 406.5h2" stroke="#6e6e6e" stroke-width="1"/><path d="M15 409.5h2" stroke="#6e6e6e" stroke-width="1"/><path d="M15 412.5h2" stroke="#6e6e6e" stroke-width="1"/><path d="M15 415.5h2" stroke="#6e6e6e" stroke-width="1"/><path d="M13 418.5h4" stroke="#6e6e6e" stroke-width="1"/><path d="M15 421.5h2" stroke="#6e6e6e" stroke-width="1"/><path d="M15 424.5h2" stroke="#6e6e6e" stroke-width="1"/><path d="M15 427.5h2" stroke="#6e6e6e" stroke-width="1"/><path d="M15 430.5h2" stroke="#6e6e6e" stroke-width="1"/><path d="M9 433.5h8" stroke="#6e6e6e" stroke-width="1"/><text transform="translate(12.800 435.3) rotate(-90)" x="0" y="0" font-size="9.800" fill="#857d72" font-family="Liberation Sans" letter-spacing="-.4" text-anchor="end">13</text><path d="M15 436.5h2" stroke="#6e6e6e" stroke-width="1"/><path d="M15 439.5h2" stroke="#6e6e6e" stroke-width="1"/><path d="M15 442.5h2" stroke="#6e6e6e" stroke-width="1"/><path d="M15 445.5h2" stroke="#6e6e6e" stroke-width="1"/><path d="M13 448.5h4" stroke="#6e6e6e" stroke-width="1"/><path d="M15 451.5h2" stroke="#6e6e6e" stroke-width="1"/><path d="M15 454.5h2" stroke="#6e6e6e" stroke-width="1"/><path d="M15 457.5h2" stroke="#6e6e6e" stroke-width="1"/><path d="M15 460.5h2" stroke="#6e6e6e" stroke-width="1"/><path d="M9 463.5h8" stroke="#6e6e6e" stroke-width="1"/><text transform="translate(12.800 465.3) rotate(-90)" x="0" y="0" font-size="9.800" fill="#857d72" font-family="Liberation Sans" letter-spacing="-.4" text-anchor="end">14</text><path d="M15 466.5h2" stroke="#6e6e6e" stroke-width="1"/><path d="M15 469.5h2" stroke="#6e6e6e" stroke-width="1"/><path d="M15 472.5h2" stroke="#6e6e6e" stroke-width="1"/><path d="M15 475.5h2" stroke="#6e6e6e" stroke-width="1"/><path d="M13 478.5h4" stroke="#6e6e6e" stroke-width="1"/><path d="M15 482.5h2" stroke="#6e6e6e" stroke-width="1"/><path d="M15 485.5h2" stroke="#6e6e6e" stroke-width="1"/><path d="M15 488.5h2" stroke="#6e6e6e" stroke-width="1"/><path d="M15 491.5h2" stroke="#6e6e6e" stroke-width="1"/><path d="M9 494.5h8" stroke="#6e6e6e" stroke-width="1"/><text transform="translate(12.800 496.3) rotate(-90)" x="0" y="0" font-size="9.800" fill="#857d72" font-family="Liberation Sans" letter-spacing="-.4" text-anchor="end">15</text><path d="M15 497.5h2" stroke="#6e6e6e" stroke-width="1"/><path d="M15 500.5h2" stroke="#6e6e6e" stroke-width="1"/><path d="M15 503.5h2" stroke="#6e6e6e" stroke-width="1"/><path d="M15 506.5h2" stroke="#6e6e6e" stroke-width="1"/><path d="M13 509.5h4" stroke="#6e6e6e" stroke-width="1"/><path d="M15 512.5h2" stroke="#6e6e6e" stroke-width="1"/><path d="M15 515.5h2" stroke="#6e6e6e" stroke-width="1"/><path d="M15 518.5h2" stroke="#6e6e6e" stroke-width="1"/><path d="M15 521.5h2" stroke="#6e6e6e" stroke-width="1"/><path d="M9 524.5h8" stroke="#6e6e6e" stroke-width="1"/><text transform="translate(12.800 526.3) rotate(-90)" x="0" y="0" font-size="9.800" fill="#857d72" font-family="Liberation Sans" letter-spacing="-.4" text-anchor="end">16</text><path d="M15 527.5h2" stroke="#6e6e6e" stroke-width="1"/><path d="M15 530.5h2" stroke="#6e6e6e" stroke-width="1"/><path d="M15 533.5h2" stroke="#6e6e6e" stroke-width="1"/><path d="M15 536.5h2" stroke="#6e6e6e" stroke-width="1"/><path d="M13 539.5h4" stroke="#6e6e6e" stroke-width="1"/><path d="M15 542.5h2" stroke="#6e6e6e" stroke-width="1"/><path d="M15 545.5h2" stroke="#6e6e6e" stroke-width="1"/><path d="M15 548.5h2" stroke="#6e6e6e" stroke-width="1"/><path d="M15 551.5h2" stroke="#6e6e6e" stroke-width="1"/><path d="M9 554.5h8" stroke="#6e6e6e" stroke-width="1"/><text transform="translate(12.800 556.3) rotate(-90)" x="0" y="0" font-size="9.800" fill="#857d72" font-family="Liberation Sans" letter-spacing="-.4" text-anchor="end">17</text><path d="M15 557.5h2" stroke="#6e6e6e" stroke-width="1"/><path d="M15 560.5h2" stroke="#6e6e6e" stroke-width="1"/><path d="M15 563.5h2" stroke="#6e6e6e" stroke-width="1"/><path d="M15 566.5h2" stroke="#6e6e6e" stroke-width="1"/><path d="M13 569.5h4" stroke="#6e6e6e" stroke-width="1"/><path d="M15 572.5h2" stroke="#6e6e6e" stroke-width="1"/><path d="M15 575.5h2" stroke="#6e6e6e" stroke-width="1"/><path d="M15 578.5h2" stroke="#6e6e6e" stroke-width="1"/><path d="M15 581.5h2" stroke="#6e6e6e" stroke-width="1"/><path d="M9 584.5h8" stroke="#6e6e6e" stroke-width="1"/><text transform="translate(12.800 586.3) rotate(-90)" x="0" y="0" font-size="9.800" fill="#857d72" font-family="Liberation Sans" letter-spacing="-.4" text-anchor="end">18</text><path d="M15 587.5h2" stroke="#6e6e6e" stroke-width="1"/><path d="M15 590.5h2" stroke="#6e6e6e" stroke-width="1"/><path d="M15 593.5h2" stroke="#6e6e6e" stroke-width="1"/><path d="M15 596.5h2" stroke="#6e6e6e" stroke-width="1"/><path d="M13 599.5h4" stroke="#6e6e6e" stroke-width="1"/><path d="M15 602.5h2" stroke="#6e6e6e" stroke-width="1"/><path d="M15 605.5h2" stroke="#6e6e6e" stroke-width="1"/><path d="M15 609.5h2" stroke="#6e6e6e" stroke-width="1"/><path d="M15 612.5h2" stroke="#6e6e6e" stroke-width="1"/><path d="M9 615.5h8" stroke="#6e6e6e" stroke-width="1"/><text transform="translate(12.800 617.3) rotate(-90)" x="0" y="0" font-size="9.800" fill="#857d72" font-family="Liberation Sans" letter-spacing="-.4" text-anchor="end">19</text><path d="M15 618.5h2" stroke="#6e6e6e" stroke-width="1"/><path d="M15 621.5h2" stroke="#6e6e6e" stroke-width="1"/><path d="M15 624.5h2" stroke="#6e6e6e" stroke-width="1"/><path d="M15 627.5h2" stroke="#6e6e6e" stroke-width="1"/><path d="M13 630.5h4" stroke="#6e6e6e" stroke-width="1"/><path d="M15 633.5h2" stroke="#6e6e6e" stroke-width="1"/><path d="M15 636.5h2" stroke="#6e6e6e" stroke-width="1"/><path d="M15 639.5h2" stroke="#6e6e6e" stroke-width="1"/><path d="M15 642.5h2" stroke="#6e6e6e" stroke-width="1"/><path d="M9 645.5h8" stroke="#6e6e6e" stroke-width="1"/><text transform="translate(12.800 647.3) rotate(-90)" x="0" y="0" font-size="9.800" fill="#857d72" font-family="Liberation Sans" letter-spacing="-.4" text-anchor="end">20</text><path d="M15 648.5h2" stroke="#6e6e6e" stroke-width="1"/><path d="M15 651.5h2" stroke="#6e6e6e" stroke-width="1"/><path d="M15 654.5h2" stroke="#6e6e6e" stroke-width="1"/><path d="M15 657.5h2" stroke="#6e6e6e" stroke-width="1"/><path d="M13 660.5h4" stroke="#6e6e6e" stroke-width="1"/><path d="M15 663.5h2" stroke="#6e6e6e" stroke-width="1"/><path d="M15 37.5h2" stroke="#6e6e6e" stroke-width="1"/><path d="M15 34.5h2" stroke="#6e6e6e" stroke-width="1"/><path d="M15 31.5h2" stroke="#6e6e6e" stroke-width="1"/><path d="M23 32v8M20.500 36.500l2.500 3.500 2.500-3.500M20 40.500h6" fill="none" stroke="#555" stroke-width="1.300"/><path d="M23 666v-8M20.500 661.500l2.500-3.500 2.500 3.500M20 657.500h6" fill="none" stroke="#555" stroke-width="1.300"/></svg>
<div class="a" id="page"></div>
<div class="a" style="left:966px;top:206px;width:5px;height:633px;background:linear-gradient(to right,rgba(0,0,0,.8),rgba(0,0,0,.55) 30%,rgba(0,0,0,.25) 65%,rgba(0,0,0,0));-webkit-mask-image:linear-gradient(transparent,#000 4px)"></div>
<div class="a" style="left:70px;top:839px;width:896px;height:5px;background:linear-gradient(rgba(0,0,0,.8),rgba(0,0,0,.55) 30%,rgba(0,0,0,.25) 65%,rgba(0,0,0,0));-webkit-mask-image:linear-gradient(to right,transparent,#000 4px)"></div>
<div class="a" style="left:966px;top:839px;width:5px;height:5px;background:radial-gradient(5.500px circle at 0 0,rgba(0,0,0,.8),rgba(0,0,0,.6) 30%,rgba(0,0,0,.3) 65%,rgba(0,0,0,0) 100%)"></div>
<div class="a" style="left:57px;top:948px;width:920px;height:18px;background:#ededed;border-top:1px solid #e3e3e3"></div>
<div class="a" style="left:95px;top:949px;width:845px;height:15px;border:1px solid #8e8e8e;border-radius:2px;background:linear-gradient(#f2f2f2 0,#e6e6e6 45%,#d0d0d0 55%,#c2c2c2 100%);box-shadow:inset 0 1px 0 #fff"></div>
<svg style="left:57px;top:949px" width="920" height="16" viewBox="0 0 920 16"><path d="M10.500 4l-4 3.700 4 3.700z" fill="#222"/><path d="M909.500 4l4 3.700-4 3.700z" fill="#222"/><path d="M457.500 4.500v6M460.500 4.500v6M463.500 4.500v6" stroke="#555" stroke-width="1"/></svg>
<div class="a" style="left:977px;top:147px;width:2px;height:819px;background:#ececec;border-left:1px solid #a6a8b6"></div>
<div class="a" style="left:35px;top:969px;width:938px;height:1px;background:#fff"></div>

<div class="d" style="left:127.500px;top:265px;line-height:18px;height:18px;transform-origin:0 14px"><span style="font-size:15px;font-weight:bold;letter-spacing:-.02px">Anfrage-/Bestellformular Glas-Terrassendach</span><span style="font-size:10.670px"> per Fax an: 0341/9876544</span></div>
<div class="a" style="left:131px;top:297px;width:13px;height:11px;border:2px solid #000;background:#fff"></div>
<div class="d b" style="left:152px;top:293px;font-size:17px;line-height:20px;height:20px;letter-spacing:-.22px;transform-origin:0 16px">Anfrage</div>
<div class="a" style="left:302px;top:297px;width:12px;height:11px;border:1.300px solid #000;background:#fff"></div>
<svg style="left:302px;top:293px" width="14" height="16" viewBox="0 0 14 16"><path d="M2.800 9.500l2.700 3.200 5.500-10" fill="none" stroke="#000" stroke-width="1.500"/></svg>
<div class="d b" style="left:325px;top:293px;font-size:17px;line-height:20px;height:20px;letter-spacing:-.12px;transform-origin:0 16px">Bestellung</div>
<svg style="left:685px;top:243px" width="222" height="44" viewBox="0 0 222 44"><defs><clipPath id="lc"><ellipse cx="21" cy="20.700" rx="20" ry="19.800"/></clipPath></defs><g clip-path="url(#lc)"><rect x="0" y="0" width="42" height="42" fill="#646464"/><path d="M19.600 -1 L26.100 -1 L22.800 43 L13.300 43 Z" fill="#fff"/></g><text x="44.500" y="29.800" font-family="Liberation Sans" font-weight="bold" font-style="italic" font-size="40" fill="#646464" stroke="#646464" stroke-width="1.100" stroke-linejoin="round" textLength="173.500" lengthAdjust="spacingAndGlyphs" letter-spacing="0">ingenious</text></svg>
<div class="d" style="left:721px;top:292px;font-size:9.600px;letter-spacing:.1px;transform-origin:0 10.500px"><b>Datum:</b> 04.03.2019</div>
<div class="hl" style="left:128px;top:321px;width:778px"></div>
<div class="hl" style="left:128px;top:339px;width:778px"></div>
<div class="hl" style="left:128px;top:400px;width:778px"></div>
<div class="vl" style="left:128px;top:321px;height:80px"></div>
<div class="vl" style="left:462px;top:321px;height:80px"></div>
<div class="vl" style="left:709px;top:321px;height:80px"></div>
<div class="vl" style="left:905px;top:321px;height:80px"></div>
<div class="d b" style="left:129.5px;top:323px;">Firma</div>
<div class="d b" style="left:463.5px;top:323px;">Lieferung</div>
<div class="d b" style="left:710.5px;top:323px;">Wunschlieferdatum</div>
<div class="d" style="left:129.5px;top:341px;"><b>Kundennummer:</b> 10006</div>
<div class="d" style="left:129.5px;top:358px;">Mustermann GmbH</div>
<div class="d" style="left:129.5px;top:371px;">Musterstraße 14</div>
<div class="d" style="left:129.5px;top:385px;">12345 Musterort</div>
<div class="cb" style="left:465px;top:341px;width:9px;height:9px"></div>
<div class="d" style="left:485.5px;top:340px;">vorkonfektioniert</div>
<div class="cb" style="left:465px;top:359px;width:9px;height:9px"></div>
<svg style="left:465px;top:357px" width="11" height="11" viewBox="0 0 11 11"><path d="M2.200 7.1l2.0 2.2 4.5-6.8" fill="none" stroke="#000" stroke-width="1.500"/></svg>
<div class="d" style="left:485.5px;top:358px;">zur Selbstkonfektionierung</div>
<div class="d" style="left:710.5px;top:340px;">08.03.2019</div>
<div class="hl" style="left:128px;top:409px;width:777px"></div>
<div class="hl" style="left:128px;top:427px;width:777px"></div>
<div class="hl" style="left:128px;top:443px;width:777px"></div>
<div class="vl" style="left:128px;top:409px;height:35px"></div>
<div class="vl" style="left:462px;top:409px;height:35px"></div>
<div class="vl" style="left:710px;top:409px;height:35px"></div>
<div class="vl" style="left:904px;top:409px;height:35px"></div>
<div class="d b" style="left:129.5px;top:411px;">Referenz</div>
<div class="d b" style="left:463.5px;top:411px;">Ansprechpartner</div>
<div class="d b" style="left:711px;top:411px;">Telefon</div>
<div class="d" style="left:129.5px;top:428px;">BE201903/0028 EFH Parkallee 55</div>
<div class="d" style="left:463.5px;top:428px;">Anton Admin</div>
<div class="d" style="left:711px;top:428px;">0123/456789</div>
<div class="hl" style="left:128px;top:452px;width:777px"></div>
<div class="hl" style="left:128px;top:470px;width:777px"></div>
<div class="hl" style="left:128px;top:531px;width:777px"></div>
<div class="vl" style="left:128px;top:452px;height:80px"></div>
<div class="vl" style="left:225px;top:452px;height:80px"></div>
<div class="vl" style="left:374px;top:470px;height:62px"></div>
<div class="vl" style="left:522px;top:470px;height:62px"></div>
<div class="vl" style="left:710px;top:452px;height:80px"></div>
<div class="vl" style="left:862px;top:452px;height:80px"></div>
<div class="vl" style="left:904px;top:452px;height:80px"></div>
<div class="hl" style="left:710px;top:488px;width:195px"></div>
<div class="hl" style="left:710px;top:506px;width:195px"></div>
<div class="d b" style="left:129.5px;top:454px;">Art</div>
<div class="d b" style="left:227px;top:454px;">Dachform</div>
<div class="d" style="left:129.5px;top:471px;">Wandmontage</div>
<div class="d b" style="left:711.5px;top:454px;">Breite a1:</div>
<div class="d b" style="left:711.5px;top:472px;">Breite a2:</div>
<div class="d b" style="left:711.5px;top:490px;">Tiefe b:</div>
<div class="d b" style="left:711.5px;top:508px;">Höhe c:</div>
<div class="d" style="left:864px;top:454px;">620 cm</div>
<div class="d" style="left:864px;top:490px;">480 cm</div>
<div class="d" style="left:864px;top:507px;">200 cm</div>
<div class="d" style="left:306.5px;top:472px;">Pultdach</div>
<div class="cb" style="left:308px;top:492px;width:9px;height:9px"></div>
<svg style="left:308px;top:490px" width="11" height="11" viewBox="0 0 11 11"><path d="M2.200 7.1l2.0 2.2 4.5-6.8" fill="none" stroke="#000" stroke-width="1.500"/></svg>
<div class="d" style="left:450.5px;top:472px;">Trapezdach</div>
<div class="cb" style="left:452px;top:492px;width:9px;height:9px"></div>
<div class="d" style="left:602.5px;top:472px;">Satteldach</div>
<div class="cb" style="left:604px;top:492px;width:9px;height:9px"></div>
<svg style="left:228px;top:472px" width="52" height="58" viewBox="0 0 52 58"><rect x="0" y="37" width="51.500" height="20.500" fill="#c9b59b"/><path d="M17 6h32l-14 24.500h-31.300z" fill="#8c0616"/><path d="M25 6l-14 24.500M33 6l-14 24.500M41 6l-14 24.500" stroke="#1a0a0a" stroke-width=".9"/><path d="M3.800 30.500h31.500" stroke="#222" stroke-width="1.200"/><path d="M3.800 30.500v26M35 30.500v26" stroke="#333" stroke-width="1.600"/><text x="5" y="19" font-family="Liberation Sans" font-size="5" fill="#555" letter-spacing="0">b</text><text x="17" y="35.500" font-family="Liberation Sans" font-size="5" fill="#555" letter-spacing="0">a1</text><text x="38" y="49.500" font-family="Liberation Sans" font-size="5" fill="#555" letter-spacing="0">c</text></svg>
<svg style="left:377px;top:472px" width="52" height="58" viewBox="0 0 52 58"><rect x=".5" y="37" width="50.500" height="20.500" fill="#c9b59b"/><path d="M23.500 6h18.300l-6.800 24.500h-31.200z" fill="#8c0616"/><path d="M28 6l-16.500 24.500M32.500 6l-13 24.500M37 6l-9.500 24.500" stroke="#1a0a0a" stroke-width=".9"/><path d="M3.800 30.500h31.500" stroke="#222" stroke-width="1.200"/><path d="M3.800 30.500v26M35 30.500v26" stroke="#333" stroke-width="1.600"/><text x="30" y="5" font-family="Liberation Sans" font-size="5" fill="#555" letter-spacing="0">a2</text><text x="5" y="17" font-family="Liberation Sans" font-size="5" fill="#555" letter-spacing="0">b</text><text x="17" y="35.500" font-family="Liberation Sans" font-size="5" fill="#555" letter-spacing="0">a1</text><text x="38" y="49.500" font-family="Liberation Sans" font-size="5" fill="#555" letter-spacing="0">c</text></svg>
<svg style="left:525px;top:472px" width="52" height="58" viewBox="0 0 52 58"><path d="M.3 32.500l50.500 4.300v20.500h-50.500z" fill="#c9b59b"/><path d="M27.500 1.200L7.400 10.800 4.800 27.800 25.400 18 44.300 31 47.700 14.300z" fill="#8c0616"/><path d="M6.500 16.500l19.800-9.700 20.400 13M5.700 22l20-9.800 19.600 12.800M27.500 1.200l-2.100 16.800" stroke="#1a0a0a" stroke-width=".8" fill="none"/><path d="M5 27.500v27M44.300 30.500v26" stroke="#333" stroke-width="1.600"/><text x="2" y="19" font-family="Liberation Sans" font-size="5" fill="#555" letter-spacing="0">b</text><text x="20" y="30.500" font-family="Liberation Sans" font-size="5" fill="#555" letter-spacing="0">a1</text><text x="37" y="49.500" font-family="Liberation Sans" font-size="5" fill="#555" letter-spacing="0">c</text></svg>
<div class="hl" style="left:128px;top:539px;width:777px"></div>
<div class="hl" style="left:128px;top:557px;width:777px"></div>
<div class="hl" style="left:128px;top:574px;width:777px"></div>
<div class="vl" style="left:128px;top:539px;height:36px"></div>
<div class="vl" style="left:225px;top:539px;height:36px"></div>
<div class="vl" style="left:322px;top:539px;height:36px"></div>
<div class="vl" style="left:419px;top:539px;height:36px"></div>
<div class="vl" style="left:516px;top:539px;height:36px"></div>
<div class="vl" style="left:613px;top:557px;height:18px"></div>
<div class="vl" style="left:710px;top:539px;height:36px"></div>
<div class="vl" style="left:807px;top:539px;height:36px"></div>
<div class="vl" style="left:904px;top:539px;height:36px"></div>
<div class="d b" style="left:129.5px;top:541px;">Dachüberstand</div>
<div class="d b" style="left:227px;top:541px;">Neigung</div>
<div class="d b" style="left:324px;top:541px;">Material</div>
<div class="d b" style="left:421px;top:541px;">Design</div>
<div class="d b" style="left:518px;top:541px;">Farbe</div>
<div class="d b" style="left:711.5px;top:541px;">Fallrohr</div>
<div class="d b" style="left:808.5px;top:541px;">Glas</div>
<div class="d" style="left:129.5px;top:558px;">10 cm</div>
<div class="d" style="left:227px;top:558px;">15°</div>
<div class="d" style="left:324px;top:558px;">Holz/Alu</div>
<div class="d" style="left:421px;top:558px;">eckig</div>
<div class="d" style="left:518px;top:558px;">anthrazit</div>
<div class="d" style="left:615px;top:558px;">pulverbeschichtet</div>
<div class="d" style="left:711.5px;top:558px;">integriert</div>
<div class="d" style="left:808.5px;top:558px;">8 / 10 mm VSG</div>
<div class="hl" style="left:128px;top:582px;width:777px"></div>
<div class="hl" style="left:128px;top:634px;width:777px"></div>
<div class="vl" style="left:128px;top:582px;height:53px"></div>
<div class="vl" style="left:394px;top:582px;height:53px"></div>
<div class="vl" style="left:642px;top:582px;height:53px"></div>
<div class="vl" style="left:904px;top:582px;height:53px"></div>
<div class="d b" style="left:130px;top:584px;">Seitenelemente links</div>
<div class="cb" style="left:131px;top:603px;width:9px;height:9px"></div>
<div class="d" style="left:150.5px;top:601px;">Festverglasung</div>
<div class="cb" style="left:131px;top:621px;width:9px;height:9px"></div>
<svg style="left:131px;top:619px" width="11" height="11" viewBox="0 0 11 11"><path d="M2.200 6.8l1.9 2.1 4.2-6.4" fill="none" stroke="#000" stroke-width="1.500"/></svg>
<div class="d" style="left:150.5px;top:619px;">Schiebewand</div>
<div class="d b" style="left:396px;top:584px;">Elemente vom</div>
<div class="cb" style="left:397px;top:603px;width:9px;height:9px"></div>
<svg style="left:397px;top:601px" width="11" height="11" viewBox="0 0 11 11"><path d="M2.200 6.8l1.9 2.1 4.2-6.4" fill="none" stroke="#000" stroke-width="1.500"/></svg>
<div class="d" style="left:416.5px;top:601px;">Festverglasung</div>
<div class="cb" style="left:397px;top:621px;width:9px;height:9px"></div>
<div class="d" style="left:416.5px;top:619px;">Schiebewand</div>
<div class="d b" style="left:644px;top:584px;">Seitenelemente rechts</div>
<div class="cb" style="left:645px;top:603px;width:9px;height:9px"></div>
<div class="d" style="left:664.5px;top:601px;">Festverglasung</div>
<div class="cb" style="left:645px;top:621px;width:9px;height:9px"></div>
<svg style="left:645px;top:619px" width="11" height="11" viewBox="0 0 11 11"><path d="M2.200 6.8l1.9 2.1 4.2-6.4" fill="none" stroke="#000" stroke-width="1.500"/></svg>
<div class="d" style="left:664.5px;top:619px;">Schiebewand</div>
<div class="hl" style="left:128px;top:642px;width:777px"></div>
<div class="hl" style="left:128px;top:661px;width:777px"></div>
<div class="hl" style="left:128px;top:676px;width:777px"></div>
<div class="vl" style="left:128px;top:642px;height:35px"></div>
<div class="vl" style="left:176px;top:642px;height:35px"></div>
<div class="vl" style="left:356px;top:642px;height:35px"></div>
<div class="vl" style="left:564px;top:642px;height:35px"></div>
<div class="vl" style="left:739px;top:642px;height:35px"></div>
<div class="vl" style="left:904px;top:642px;height:35px"></div>
<div class="d b" style="left:129.5px;top:644px;">Markise</div>
<div class="d b" style="left:177.5px;top:644px;">Art</div>
<div class="d b" style="left:357.5px;top:644px;">Tuchfarbe</div>
<div class="d b" style="left:565.5px;top:644px;">Muster</div>
<div class="d b" style="left:740.5px;top:644px;">Bedienung</div>
<div class="d" style="left:129.5px;top:661px;">ja</div>
<div class="d" style="left:177.5px;top:661px;">innen</div>
<div class="d" style="left:357.5px;top:661px;">lichtgrau</div>
<div class="d" style="left:565.5px;top:661px;">uni</div>
<div class="d" style="left:740.5px;top:661px;">Motor</div>
<div class="d b" style="left:129.5px;top:688px;">Bemerkungen:</div>
<div class="hl" style="left:128px;top:720px;width:314px"></div>
<div class="hl" style="left:128px;top:737px;width:314px"></div>
<div class="hl" style="left:128px;top:755px;width:314px"></div>
<div class="hl" style="left:565px;top:686px;width:338px"></div>
<div class="hl" style="left:565px;top:737px;width:338px"></div>
<div class="hl" style="left:565px;top:755px;width:338px"></div>
<div class="vl" style="left:565px;top:686px;height:70px"></div>
<div class="vl" style="left:902px;top:686px;height:70px"></div>
<div class="d" style="left:566.5px;top:687px;font-size:7.100px;line-height:8px;height:8px;letter-spacing:.14px;transform-origin:0 6.500px;transform:translateX(.5px) scaleY(.97)">Die angegebenen Maße sind Fertigmaße zzgl. Pfostenstärke. Terrassendächer werden maßgefertigt</div>
<div class="d" style="left:566.5px;top:695px;font-size:7.100px;line-height:8px;height:8px;letter-spacing:.14px;transform-origin:0 6.500px;transform:translateX(.5px) scaleY(.97)">und sind von der Rückgabe ausgeschlossen.</div>
<div class="d" style="left:566.5px;top:739px;">Unterschrift Besteller</div>

<div class="a" style="left:979px;top:147px;width:298px;height:1px;background:#d9d9d9"></div>
<div class="a" id="rp">
<div class="rh" style="top:0px"><span style="position:absolute;left:19px;top:1px;line-height:15px">Allgemein</span><svg style="right:5px;left:auto;top:5px" width="9" height="7" viewBox="0 0 9 7"><path d="M.8 6.200l3.700-3.700 3.700 3.700" fill="none" stroke="#e4e4e4" stroke-width="1.600"/><path d="M.8 5.200l3.700-3.700 3.700 3.700" fill="none" stroke="#8a8c9c" stroke-width="1.900"/></svg></div>
<div class="rr" style="top:17px"><div class="ri"></div><div class="rl blue">Bezeichnung</div><div class="rv gray" style="letter-spacing:-.35px">Bestellung</div></div>
<div class="rr" style="top:36px"><div class="ri"></div><div class="rl blue" style="letter-spacing:-0.6px">Nummer</div><div class="rv gray" style="letter-spacing:-.2px">BE201903/0028</div></div>
<div class="rr" style="top:55px"><div class="ri"></div><div class="rl " style="letter-spacing:-0.65px">Kommission</div><div class="rv " style="letter-spacing:-.4px">EFH Parkallee 55<div class="dd"></div></div></div>
<div class="rr" style="top:74px"><div class="ri"></div><div class="rl ">Bestellung vom</div><div class="rv " style="letter-spacing:0">04.03.2019<div class="dd"></div></div></div>
<div class="rr" style="top:93px"><div class="ri"></div><div class="rl ">Wunschlieferdatum</div><div class="rv " style="letter-spacing:0">08.03.2019<div class="dd"></div></div></div>
<div class="rr" style="top:112px"><div class="ri"></div><div class="rl blue" style="letter-spacing:0.1px">Kontakt</div><div class="rv gray" style="letter-spacing:-.2px">Terrassendach Demo H…<div style="position:absolute;right:5px;top:8px;width:10px;height:2px;background:linear-gradient(to right,#1e1e2d 0,#1e1e2d 2px,transparent 2px,transparent 4px,#1e1e2d 4px,#1e1e2d 6px,transparent 6px,transparent 8px,#1e1e2d 8px)"></div></div></div>
<div class="rr" style="top:131px"><div class="ri"></div><div class="rl blue" style="letter-spacing:0px">Projektvorlage</div><div class="rv gray" style="letter-spacing:-.12px">Bestellung Terrassendach<div class="dd"></div></div></div>
<div class="rr" style="top:150px"><div class="ri"></div><div class="rl ">Bearbeiter</div><div class="rv " style="">Anton Admin<div class="dd"></div></div></div>
<div class="rr" style="top:169px"><div class="ri"></div><div class="rl ">Zahlungsart</div><div class="rv " style="letter-spacing:.1px">Lastschrift<div class="dd"></div></div></div>
<div class="rr" style="top:188px"><div class="ri"></div><div class="rl ">Lieferbedingungen</div><div class="rv " style="">frei Haus<div class="dd"></div></div></div>
<div class="rr" style="top:207px"><div class="ri"></div><div class="rl " style="letter-spacing:-0.05px">Lieferstatus</div><div class="rv " style="letter-spacing:.05px">Nicht geliefert<div class="dd"></div></div></div>
<div class="rr" style="top:226px"><div class="ri"></div><div class="rl " style="letter-spacing:0.1px">Projekttext</div><div class="rv " style=""><div class="dd"></div></div></div>
<div class="rr" style="top:245px"><div class="ri"></div><div class="rl ">Notizen</div><div class="rv " style=""><div class="dd"></div></div></div>
<div class="rh" style="top:264px"><span style="position:absolute;left:19px;top:1px;line-height:15px">Adressen</span><svg style="right:5px;left:auto;top:5px" width="9" height="7" viewBox="0 0 9 7"><path d="M.8 6.200l3.700-3.700 3.700 3.700" fill="none" stroke="#e4e4e4" stroke-width="1.600"/><path d="M.8 5.200l3.700-3.700 3.700 3.700" fill="none" stroke="#8a8c9c" stroke-width="1.900"/></svg></div>
<div class="rr" style="top:281px"><div class="ri"></div><div class="rl blue">Adresse</div><div class="rv " style="">Kundenadresse<div class="dd"></div></div></div>
<div class="rr" style="top:300px"><div class="ri"></div><div class="rl ">Name</div><div class="rv " style="letter-spacing:-.2px">Terrassendach Demo Herst…</div></div>
<div class="rr" style="top:319px"><div class="ri"></div><div class="rl ">Straße</div><div class="rv " style="">Industriegebiet West</div></div>
<div class="rr" style="top:338px"><div class="ri"></div><div class="rl ">Wohnung</div><div class="rv " style=""></div></div>
<div class="rr" style="top:357px"><div class="ri"></div><div class="rl ">PLZ</div><div class="rv " style="padding-left:3px;letter-spacing:0">12345</div></div>
<div class="rr" style="top:376px"><div class="ri"></div><div class="rl ">Ort</div><div class="rv " style="">Musterort</div></div>
<div class="rr" style="top:395px"><div class="ri"></div><div class="rl ">Ortsteil</div><div class="rv " style=""></div></div>
<div class="rr" style="top:414px"><div class="ri"></div><div class="rl ">Land</div><div class="rv " style="">DE - Deutschland</div></div>
<div class="rr" style="top:433px"><div class="ri"></div><div class="rl ">Ansprechpartner</div><div class="rv " style="">Herr Wahl</div></div>
<div class="rr" style="top:452px"><div class="ri"></div><div class="rl ">Telefonnr.</div><div class="rv " style="letter-spacing:0">0341/9876543<div class="dd"></div></div></div>
<div class="rr" style="top:471px"><div class="ri"></div><div class="rl ">E-Mail</div><div class="rv " style=""></div></div>
<div class="rh" style="top:490px"><span style="position:absolute;left:19px;top:1px;line-height:15px">Beträge</span><svg style="right:5px;left:auto;top:5px" width="9" height="7" viewBox="0 0 9 7"><path d="M.8 6.200l3.700-3.700 3.700 3.700" fill="none" stroke="#e4e4e4" stroke-width="1.600"/><path d="M.8 5.200l3.700-3.700 3.700 3.700" fill="none" stroke="#8a8c9c" stroke-width="1.900"/></svg></div>
<div class="rr" style="top:507px"><div class="ri"></div><div class="rl gray">Einkaufspreis</div><div class="rv gray" style="text-align:right;padding-right:2px;letter-spacing:.1px">3.108,54 €</div></div>
<div class="rh" style="top:526px"><span style="position:absolute;left:19px;top:1px;line-height:15px">Status</span><svg style="right:5px;left:auto;top:5px" width="9" height="7" viewBox="0 0 9 7"><path d="M.8 6.200l3.700-3.700 3.700 3.700" fill="none" stroke="#e4e4e4" stroke-width="1.600"/><path d="M.8 5.200l3.700-3.700 3.700 3.700" fill="none" stroke="#8a8c9c" stroke-width="1.900"/></svg></div>
<div class="rr" style="top:543px"><div class="ri"></div><div class="rl ">Lagergebucht</div><div class="rv " style=""><div style="position:absolute;left:68px;top:2px;width:13px;height:13px;border:1px solid #8f93a6;background:#fff;box-shadow:inset 0 0 0 1.500px #dcdde8"></div><svg style="left:68px;top:-1px" width="16" height="16" viewBox="0 0 16 16"><path d="M3 9l3.500 4 6.500-11.500" fill="none" stroke="#14141e" stroke-width="1.700"/></svg></div></div>
<div class="rr" style="top:562px"><div class="ri"></div><div class="rl ">Abgeschlossen</div><div class="rv " style=""><div style="position:absolute;left:68px;top:2px;width:13px;height:13px;border:1px solid #8f93a6;background:#fff;box-shadow:inset 0 0 0 1.500px #dcdde8"></div></div></div>
<div class="rr" style="top:581px"><div class="ri"></div><div class="rl ">Archiviert</div><div class="rv " style=""><div style="position:absolute;left:68px;top:2px;width:13px;height:13px;border:1px solid #8f93a6;background:#fff;box-shadow:inset 0 0 0 1.500px #dcdde8"></div></div></div>
</div>

<div class="t" style="left:54px;top:978px;letter-spacing:.05px">erstellt</div>
<div class="a" style="left:165px;top:975px;width:175px;height:20px;border:1px solid #dcdce8;border-top-color:#a6a6ac;border-radius:2px;background:#f0f0f0"></div>
<div class="t" style="left:167px;top:978px;letter-spacing:0">04.03.2019 08:44:16 - admin</div>
<div class="t" style="left:442px;top:978px;letter-spacing:-.05px">geändert</div>
<div class="a" style="left:512px;top:975px;width:175px;height:20px;border:1px solid #dcdce8;border-top-color:#a6a6ac;border-radius:2px;background:#f0f0f0"></div>
<div class="t" style="left:514px;top:978px;letter-spacing:0">04.03.2019 12:33:21 - admin</div>
<!-- bottom tabs -->
<div class="a" style="left:0;top:1002px;width:1280px;height:22px;background:#f0f0f0"></div>
<div class="a" style="left:6px;top:1001px;width:98px;height:19px;background:linear-gradient(#ededf1,#dedee5);border:1px solid #a0a2ae;border-top:none;box-shadow:inset 1px -1px 0 rgba(255,255,255,.8)"></div>
<div class="t" style="left:14px;top:1002px;color:#3c3c60;letter-spacing:0">Einkauf [22 / 30]</div>
<div class="a" style="left:103px;top:1001px;width:148px;height:21px;background:#f0f0f0;border:1px solid #a0a2ae;border-top:none"></div>
<div class="t" style="left:112px;top:1003px;letter-spacing:-.1px">Bestellung BE201903/0028</div>
<div class="a" style="left:1261px;top:1009px;border-left:4px solid transparent;border-right:4px solid transparent;border-top:4px solid #6b6c78"></div>

</body></html>
